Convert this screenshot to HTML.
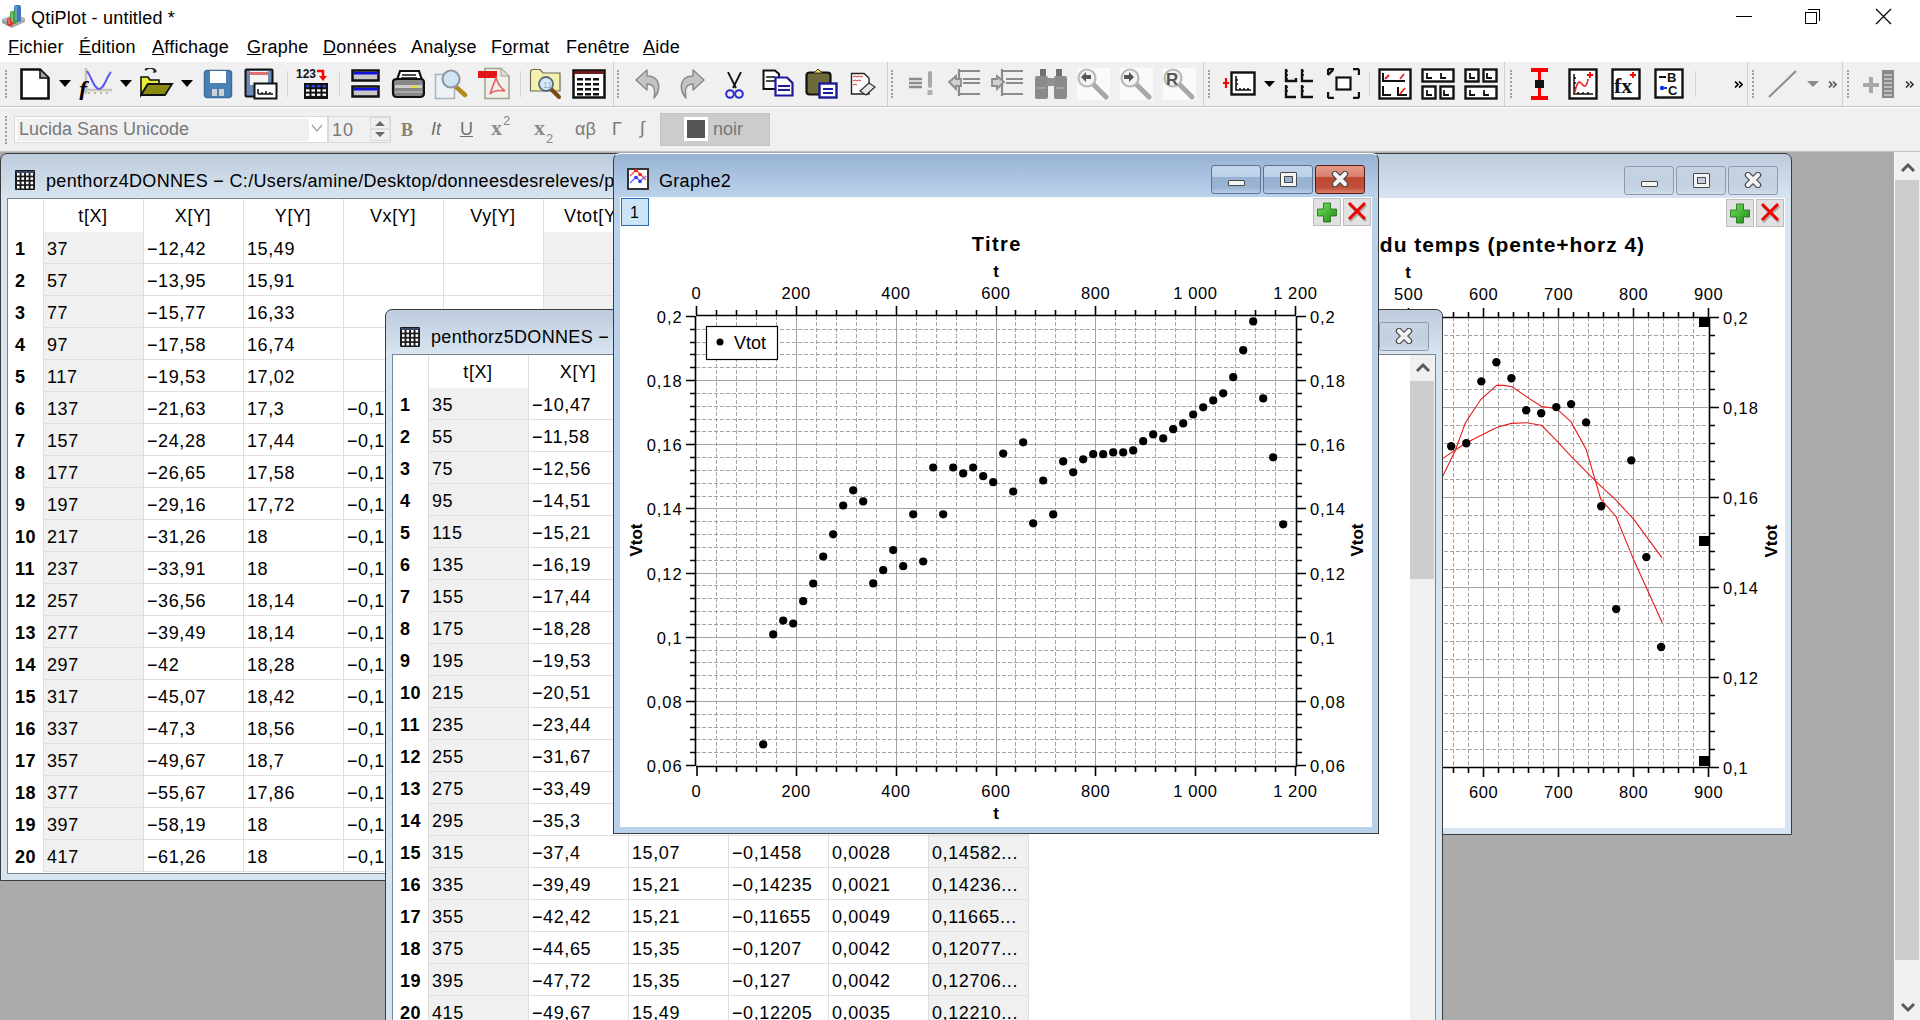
<!DOCTYPE html><html><head><meta charset="utf-8"><title>QtiPlot</title><style>
html,body{margin:0;padding:0;}body{width:1920px;height:1020px;overflow:hidden;position:relative;background:#ababab;font-family:"Liberation Sans",sans-serif;}
div{box-sizing:border-box;} .u{text-decoration:underline;text-underline-offset:1px;text-decoration-thickness:1px;}
</style></head><body>
<div style="position:absolute;left:0px;top:0px;width:1920px;height:35px;background:#fff;"></div>
<svg style="position:absolute;left:0px;top:0px" width="28" height="32" viewBox="0 0 28 32">
<polygon points="2,19 15,14 25,18 12,24" fill="#b4b8bc"/><polygon points="2,19 12,24 12,28 2,23" fill="#9a9ea2"/><polygon points="25,18 12,24 12,28 25,22" fill="#a8acb0"/>
<rect x="14" y="5" width="7" height="17" rx="2" fill="#3f78b8"/><rect x="10" y="11" width="7" height="13" rx="2" fill="#3fa048"/><rect x="7" y="18" width="6" height="8" rx="2" fill="#d8382a"/>
<rect x="15" y="6" width="2" height="14" fill="#7aa8d8" opacity="0.7"/><rect x="11" y="12" width="2" height="10" fill="#8ad08a" opacity="0.7"/><rect x="8" y="19" width="2" height="5" fill="#f08070" opacity="0.7"/></svg>
<div style="position:absolute;left:31px;top:9px;font-size:18px;line-height:1;color:#000;font-weight:normal;white-space:nowrap;letter-spacing:0.2px;">QtiPlot - untitled *</div>
<div style="position:absolute;left:1736px;top:16px;width:16px;height:1px;background:#000;"></div>
<div style="position:absolute;left:1808px;top:9px;width:12px;height:12px;border:1px solid #000;border-left:none;border-bottom:none;"></div>
<div style="position:absolute;left:1805px;top:12px;width:12px;height:12px;border:1px solid #000;background:#fff;"></div>
<svg style="position:absolute;left:1875px;top:8px" width="17" height="17"><path d="M1,1 L16,16 M16,1 L1,16" stroke="#000" stroke-width="1.2"/></svg>
<div style="position:absolute;left:0px;top:35px;width:1920px;height:26px;background:#fff;"></div>
<div style="position:absolute;left:8px;top:38px;font-size:18px;line-height:1;color:#000;font-weight:normal;white-space:nowrap;letter-spacing:0.25px;"><span class="u">F</span>ichier</div>
<div style="position:absolute;left:79px;top:38px;font-size:18px;line-height:1;color:#000;font-weight:normal;white-space:nowrap;letter-spacing:0.25px;"><span class="u">É</span>dition</div>
<div style="position:absolute;left:152px;top:38px;font-size:18px;line-height:1;color:#000;font-weight:normal;white-space:nowrap;letter-spacing:0.25px;"><span class="u">A</span>ffichage</div>
<div style="position:absolute;left:247px;top:38px;font-size:18px;line-height:1;color:#000;font-weight:normal;white-space:nowrap;letter-spacing:0.25px;"><span class="u">G</span>raphe</div>
<div style="position:absolute;left:323px;top:38px;font-size:18px;line-height:1;color:#000;font-weight:normal;white-space:nowrap;letter-spacing:0.25px;"><span class="u">D</span>onnées</div>
<div style="position:absolute;left:411px;top:38px;font-size:18px;line-height:1;color:#000;font-weight:normal;white-space:nowrap;letter-spacing:0.25px;">Anal<span class="u">y</span>se</div>
<div style="position:absolute;left:491px;top:38px;font-size:18px;line-height:1;color:#000;font-weight:normal;white-space:nowrap;letter-spacing:0.25px;">F<span class="u">o</span>rmat</div>
<div style="position:absolute;left:566px;top:38px;font-size:18px;line-height:1;color:#000;font-weight:normal;white-space:nowrap;letter-spacing:0.25px;">Fenêt<span class="u">r</span>e</div>
<div style="position:absolute;left:643px;top:38px;font-size:18px;line-height:1;color:#000;font-weight:normal;white-space:nowrap;letter-spacing:0.25px;"><span class="u">A</span>ide</div>
<div style="position:absolute;left:0px;top:61px;width:1920px;height:91px;background:#f0f0f0;"></div>
<div style="position:absolute;left:0px;top:61px;width:1920px;height:1px;background:#fbfbfb;"></div>
<div style="position:absolute;left:0px;top:106px;width:1920px;height:1px;background:#c6c6c6;"></div>
<div style="position:absolute;left:0px;top:107px;width:1920px;height:1px;background:#fcfcfc;"></div>
<div style="position:absolute;left:0px;top:151px;width:1920px;height:1px;background:#c4c4c4;"></div>
<div style="position:absolute;left:613px;top:62px;width:1px;height:44px;background:#d0d0d0;"></div>
<div style="position:absolute;left:887px;top:62px;width:1px;height:44px;background:#d0d0d0;"></div>
<div style="position:absolute;left:1203px;top:62px;width:1px;height:44px;background:#d0d0d0;"></div>
<div style="position:absolute;left:1504px;top:62px;width:1px;height:44px;background:#d0d0d0;"></div>
<div style="position:absolute;left:1747px;top:62px;width:1px;height:44px;background:#d0d0d0;"></div>
<div style="position:absolute;left:1842px;top:62px;width:1px;height:44px;background:#d0d0d0;"></div>
<div style="position:absolute;left:5px;top:70px;width:3px;height:28px;border-left:2px dotted #a0a0a0;"></div>
<div style="position:absolute;left:617px;top:70px;width:3px;height:28px;border-left:2px dotted #a0a0a0;"></div>
<div style="position:absolute;left:891px;top:70px;width:3px;height:28px;border-left:2px dotted #a0a0a0;"></div>
<div style="position:absolute;left:1208px;top:70px;width:3px;height:28px;border-left:2px dotted #a0a0a0;"></div>
<div style="position:absolute;left:1510px;top:70px;width:3px;height:28px;border-left:2px dotted #a0a0a0;"></div>
<div style="position:absolute;left:1752px;top:70px;width:3px;height:28px;border-left:2px dotted #a0a0a0;"></div>
<div style="position:absolute;left:1847px;top:70px;width:3px;height:28px;border-left:2px dotted #a0a0a0;"></div>
<div style="position:absolute;left:5px;top:116px;width:3px;height:28px;border-left:2px dotted #a0a0a0;"></div>
<div style="position:absolute;left:287px;top:71px;width:1px;height:26px;background:#d3d3d3;"></div>
<div style="position:absolute;left:339px;top:71px;width:1px;height:26px;background:#d3d3d3;"></div>
<div style="position:absolute;left:520px;top:71px;width:1px;height:26px;background:#d3d3d3;"></div>
<div style="position:absolute;left:1369px;top:71px;width:1px;height:26px;background:#d3d3d3;"></div>
<div style="position:absolute;left:1695px;top:71px;width:1px;height:26px;background:#d3d3d3;"></div>
<svg style="position:absolute;left:20px;top:68px;" width="30" height="32" viewBox="0 0 30 32"><path d="M1.5,1.5 H20 L28.5,10 V30.5 H1.5 Z" fill="#fff" stroke="#111" stroke-width="2.6"/><path d="M20,2 V10 H28" fill="#9aa4ae" stroke="#111" stroke-width="1.6"/></svg>
<svg style="position:absolute;left:59px;top:80px;" width="12" height="7" viewBox="0 0 12 7"><path d="M0,0 H12 L6.0,7 Z" fill="#000"/></svg>
<svg style="position:absolute;left:79px;top:68px;" width="34" height="32" viewBox="0 0 34 32"><path d="M7,0 V26 M7,22 H33" stroke="#c8c4b4" stroke-width="2.5"/><path d="M10,26 v-2 M16,26 v-2 M22,26 v-2 M28,26 v-2" stroke="#a8a498" stroke-width="1.5"/><path d="M8,3 C12,8 15,21 20,21 C25,21 27,10 32,4" fill="none" stroke="#5b5bf0" stroke-width="2"/><text x="0" y="29" font-family="Liberation Serif,serif" font-size="24" font-weight="bold" font-style="italic" fill="#000">f</text></svg>
<svg style="position:absolute;left:120px;top:80px;" width="12" height="7" viewBox="0 0 12 7"><path d="M0,0 H12 L6.0,7 Z" fill="#000"/></svg>
<svg style="position:absolute;left:140px;top:68px;" width="34" height="30" viewBox="0 0 34 30"><path d="M5,2 C9,-1 12,-1 16,3" fill="none" stroke="#222" stroke-width="1.8"/><path d="M14,1 L17,4 L13,5 Z" fill="#222"/><path d="M1,9 H8 L10,12 H19 V17 H7 L1,27 Z" fill="#e8ec3a" stroke="#111" stroke-width="1.6"/><path d="M1,27 L8,16 H32 L25,27 Z" fill="#8a8a10" stroke="#111" stroke-width="1.8"/></svg>
<svg style="position:absolute;left:181px;top:80px;" width="12" height="7" viewBox="0 0 12 7"><path d="M0,0 H12 L6.0,7 Z" fill="#000"/></svg>
<svg style="position:absolute;left:203px;top:69px;" width="30" height="30" viewBox="0 0 30 30"><rect x="1.5" y="1.5" width="27" height="27" rx="3" fill="#4a80b4" stroke="#3a6c9c" stroke-width="1.5"/><rect x="7" y="2" width="16" height="12" fill="#fff"/><rect x="9" y="20" width="5" height="7" fill="#d0d0d0"/><rect x="16" y="20" width="5" height="7" fill="#d0d0d0"/></svg>
<svg style="position:absolute;left:244px;top:68px;" width="34" height="32" viewBox="0 0 34 32"><rect x="1.5" y="1.5" width="27" height="27" rx="1" fill="#6a8cb4" stroke="#111" stroke-width="2"/><rect x="6" y="3" width="18" height="14" fill="#f4f4f4"/><rect x="6" y="4" width="18" height="3" fill="#e07070"/><rect x="10.5" y="15.5" width="22" height="15" fill="#fff" stroke="#111" stroke-width="2"/><path d="M14,26 V21 M14,26 H29 M18,26 v-2 M22,26 v-3 M26,26 v-2" stroke="#111" stroke-width="1.5"/></svg>
<svg style="position:absolute;left:296px;top:67px;" width="34" height="32" viewBox="0 0 34 32"><text x="0" y="11" font-family="Liberation Sans,sans-serif" font-size="12" font-weight="bold" fill="#111">123</text><path d="M21,4 H27 V10" fill="none" stroke="#f00" stroke-width="2.5"/><path d="M23,9 H31 L27,14 Z" fill="#f00"/><rect x="8" y="16" width="24" height="16" fill="#111"/><rect x="10.0" y="18.0" width="3.5" height="2.3" fill="#3344dd"/><rect x="10.0" y="22.3" width="3.5" height="2.3" fill="#fff"/><rect x="10.0" y="26.6" width="3.5" height="2.3" fill="#fff"/><rect x="15.5" y="18.0" width="3.5" height="2.3" fill="#3344dd"/><rect x="15.5" y="22.3" width="3.5" height="2.3" fill="#fff"/><rect x="15.5" y="26.6" width="3.5" height="2.3" fill="#fff"/><rect x="21.0" y="18.0" width="3.5" height="2.3" fill="#3344dd"/><rect x="21.0" y="22.3" width="3.5" height="2.3" fill="#fff"/><rect x="21.0" y="26.6" width="3.5" height="2.3" fill="#fff"/><rect x="26.5" y="18.0" width="3.5" height="2.3" fill="#3344dd"/><rect x="26.5" y="22.3" width="3.5" height="2.3" fill="#fff"/><rect x="26.5" y="26.6" width="3.5" height="2.3" fill="#fff"/></svg>
<svg style="position:absolute;left:351px;top:69px;" width="29" height="30" viewBox="0 0 29 30"><rect x="1.5" y="1.5" width="26" height="10" fill="#c8c8c8" stroke="#111" stroke-width="2.5"/><rect x="3" y="3" width="23" height="2.5" fill="#1010e0"/><rect x="1.5" y="17.5" width="26" height="10" fill="#c8c8c8" stroke="#111" stroke-width="2.5"/><rect x="3" y="19" width="23" height="2.5" fill="#1010e0"/></svg>
<svg style="position:absolute;left:391px;top:69px;" width="34" height="30" viewBox="0 0 34 30"><path d="M9,2 H28 L31,11 H6 Z" fill="#fff" stroke="#111" stroke-width="2.2"/><path d="M11,6 H25 M10,9 H26" stroke="#111" stroke-width="1.6"/><path d="M2,13 Q2,10 6,10 H30 Q33,10 33,14 V24 Q33,28 29,28 H6 Q2,28 2,24 Z" fill="#888" stroke="#111" stroke-width="2.2"/><rect x="4" y="16" width="27" height="3" fill="#ccc"/><rect x="20" y="17" width="6" height="2" fill="#e8e020"/><rect x="4" y="22" width="27" height="2" fill="#aaa"/></svg>
<svg style="position:absolute;left:434px;top:68px;" width="34" height="32" viewBox="0 0 34 32"><rect x="1.5" y="6.5" width="19" height="24" fill="#eef2f6" stroke="#a8b4c0" stroke-width="1.5"/><path d="M21,18 L31,27" stroke="#b08a20" stroke-width="4.5" stroke-linecap="round"/><circle cx="17" cy="11" r="8.5" fill="#cfe4f4" stroke="#909aa4" stroke-width="2.2"/></svg>
<svg style="position:absolute;left:477px;top:67px;" width="34" height="33" viewBox="0 0 34 33"><path d="M8,1.5 H24 L32,9 V31.5 H8 Z" fill="#f0f0ea" stroke="#a0a090" stroke-width="1.5"/><path d="M24,2 V9 H32" fill="#ddd" stroke="#a0a090" stroke-width="1"/><rect x="1" y="4" width="19" height="7" fill="#e01818"/><path d="M13,27 C16,18 18,14 19,11 C20,14 22,20 28,24 C22,23 16,24 13,27 Z" fill="none" stroke="#e86060" stroke-width="1.6"/></svg>
<svg style="position:absolute;left:529px;top:68px;" width="34" height="32" viewBox="0 0 34 32"><path d="M1.5,4 Q1.5,1.5 4,1.5 H11 L14,5 H31 V23 H1.5 Z" fill="#f4f0b0" stroke="#6a6a50" stroke-width="1.2"/><path d="M22,21 L30,29" stroke="#7a4a10" stroke-width="4" stroke-linecap="round"/><circle cx="17" cy="16" r="7" fill="#d8e8f8" stroke="#5a6a7a" stroke-width="1.8"/><text x="14" y="20" font-size="9" fill="#9ab">11</text></svg>
<svg style="position:absolute;left:572px;top:69px;" width="34" height="30" viewBox="0 0 34 30"><rect x="1.5" y="1.5" width="31" height="27" fill="#fff" stroke="#111" stroke-width="2.5"/><rect x="2" y="2" width="30" height="3" fill="#6a1a1a"/><rect x="5" y="9" width="6" height="2.5" fill="#111"/><rect x="5" y="14" width="6" height="2.5" fill="#111"/><rect x="5" y="19" width="6" height="2.5" fill="#111"/><rect x="5" y="24" width="6" height="2.5" fill="#111"/><rect x="13" y="9" width="6" height="2.5" fill="#111"/><rect x="13" y="14" width="6" height="2.5" fill="#111"/><rect x="13" y="19" width="6" height="2.5" fill="#111"/><rect x="13" y="24" width="6" height="2.5" fill="#111"/><rect x="21" y="9" width="6" height="2.5" fill="#111"/><rect x="21" y="14" width="6" height="2.5" fill="#111"/><rect x="21" y="19" width="6" height="2.5" fill="#111"/><rect x="21" y="24" width="6" height="2.5" fill="#111"/></svg>
<svg style="position:absolute;left:635px;top:68px;" width="27" height="32" viewBox="0 0 27 32"><path d="M12,2 L1,12 L12,22 L12,16 C18,16 21,20 19,30 C26,22 26,8 12,8 Z" fill="#c4c4c4" stroke="#8a8a8a" stroke-width="1.5" stroke-linejoin="round"/></svg>
<svg style="position:absolute;left:678px;top:68px;" width="27" height="32" viewBox="0 0 27 32"><path d="M15,2 L26,12 L15,22 L15,16 C9,16 6,20 8,30 C1,22 1,8 15,8 Z" fill="#c4c4c4" stroke="#8a8a8a" stroke-width="1.5" stroke-linejoin="round"/></svg>
<svg style="position:absolute;left:725px;top:72px;" width="19" height="28" viewBox="0 0 19 28"><path d="M3,0 L11,16 M16,0 L8,16" stroke="#111" stroke-width="1.8"/><circle cx="5" cy="22" r="3.8" fill="none" stroke="#2a2ad0" stroke-width="2"/><circle cx="14" cy="22" r="3.8" fill="none" stroke="#2a2ad0" stroke-width="2"/></svg>
<svg style="position:absolute;left:762px;top:69px;" width="32" height="28" viewBox="0 0 32 28"><path d="M1.5,1.5 H13 L17,5 V20 H1.5 Z" fill="#fff" stroke="#111" stroke-width="2"/><path d="M4,8 H13 M4,12 H13" stroke="#111" stroke-width="1.5"/><path d="M13.5,8.5 H25 L30.5,14 V26.5 H13.5 Z" fill="#fff" stroke="#1a1a9a" stroke-width="2.2"/><path d="M16,17 H28 M16,21 H28" stroke="#1a1a9a" stroke-width="1.8"/></svg>
<svg style="position:absolute;left:805px;top:68px;" width="33" height="32" viewBox="0 0 33 32"><rect x="1.5" y="4.5" width="24" height="22" rx="3" fill="#6e6a3a" stroke="#111" stroke-width="2.2"/><path d="M9,5 L13,1 L17,5 Z" fill="#f0e030" stroke="#444" stroke-width="1"/><rect x="14.5" y="15.5" width="17" height="14" fill="#fff" stroke="#1a1a9a" stroke-width="2.4"/><path d="M18,21 H28 M18,25 H28" stroke="#1a1a9a" stroke-width="1.8"/></svg>
<svg style="position:absolute;left:850px;top:72px;" width="26" height="26" viewBox="0 0 26 26"><path d="M1.5,1.5 H14 L19,6 V22 H1.5 Z" fill="#fff" stroke="#222" stroke-width="1.4"/><path d="M3,5 l2,-1 2,1 2,-1 2,1 2,-1 M3,9 l2,-1 2,1 2,-1 2,1 M3,13 l2,-1 2,1" fill="none" stroke="#e03030" stroke-width="1"/><path d="M10,19 L19,11 L25,15 L16,23 Z" fill="#e8e8e8" stroke="#333" stroke-width="1.3"/></svg>
<svg style="position:absolute;left:908px;top:71px;" width="28" height="26" viewBox="0 0 28 26"><path d="M1,8 H14 M1,12 H14 M1,16 H14" stroke="#8c8c8c" stroke-width="2.4"/><path d="M22,2 V15" stroke="#a8a8a8" stroke-width="4" stroke-linecap="round"/><rect x="19.5" y="19" width="5" height="5" fill="#b0b0b0"/></svg>
<svg style="position:absolute;left:948px;top:68px;" width="34" height="31" viewBox="0 0 34 31"><path d="M11,1 V28 M10,3 H32 M10,26 H32 M15,11 H32 M15,15 H32" stroke="#8c8c8c" stroke-width="2.2"/><path d="M1,14 L8,8 V11 H13 V18 H8 V21 Z" fill="#d0d0d0" stroke="#8c8c8c" stroke-width="1.8"/></svg>
<svg style="position:absolute;left:991px;top:68px;" width="34" height="31" viewBox="0 0 34 31"><path d="M11,1 V28 M10,3 H32 M10,26 H32 M15,11 H32 M15,15 H32" stroke="#8c8c8c" stroke-width="2.2"/><path d="M13,14 L6,8 V11 H1 V18 H6 V21 Z" fill="#d0d0d0" stroke="#8c8c8c" stroke-width="1.8"/></svg>
<svg style="position:absolute;left:1034px;top:68px;" width="34" height="31" viewBox="0 0 34 31"><rect x="6" y="1" width="6" height="8" fill="#707070"/><rect x="22" y="1" width="6" height="8" fill="#707070"/><rect x="1" y="8" width="13" height="23" rx="2" fill="#8a8a8a"/><rect x="20" y="8" width="13" height="23" rx="2" fill="#8a8a8a"/><rect x="13" y="10" width="8" height="8" fill="#909090"/><path d="M3,20 H12 M22,20 H31" stroke="#aaa" stroke-width="1.5"/></svg>
<svg style="position:absolute;left:1077px;top:68px;" width="33" height="32" viewBox="0 0 33 32"><rect x="0" y="0" width="33" height="32" fill="#fafafa"/><path d="M17,17 L29,29" stroke="#a8a8a8" stroke-width="5" stroke-linecap="round"/><circle cx="10" cy="10" r="8.5" fill="#f4f4f4" stroke="#b8b8b8" stroke-width="2.2"/><path d="M4,9 L9,4 V7 H14 V11 H9 V14 Z" fill="#555"/></svg>
<svg style="position:absolute;left:1120px;top:68px;" width="33" height="32" viewBox="0 0 33 32"><rect x="0" y="0" width="33" height="32" fill="#fafafa"/><path d="M17,17 L29,29" stroke="#a8a8a8" stroke-width="5" stroke-linecap="round"/><circle cx="10" cy="10" r="8.5" fill="#f4f4f4" stroke="#b8b8b8" stroke-width="2.2"/><path d="M14,9 L9,4 V7 H4 V11 H9 V14 Z" fill="#555"/></svg>
<svg style="position:absolute;left:1163px;top:68px;" width="33" height="32" viewBox="0 0 33 32"><rect x="0" y="0" width="33" height="32" fill="#fafafa"/><path d="M17,17 L29,29" stroke="#a8a8a8" stroke-width="5" stroke-linecap="round"/><circle cx="10" cy="10" r="8.5" fill="#f4f4f4" stroke="#b8b8b8" stroke-width="2.2"/><text x="3" y="17" font-family="Liberation Sans,sans-serif" font-size="17" font-weight="bold" fill="#555">R</text></svg>
<svg style="position:absolute;left:1222px;top:71px;" width="34" height="26" viewBox="0 0 34 26"><path d="M4,7 V17 M1,12 H7" stroke="#f00" stroke-width="2.2"/><rect x="9.5" y="1.5" width="23" height="22" fill="#fff" stroke="#111" stroke-width="2.4"/><path d="M14,5 V19 H29 M14,9 h2 M14,13 h2 M18,19 v-2 M22,19 v-2 M26,19 v-2" fill="none" stroke="#111" stroke-width="1.6"/></svg>
<svg style="position:absolute;left:1264px;top:81px;" width="11" height="6" viewBox="0 0 11 6"><path d="M0,0 H11 L5.5,6 Z" fill="#000"/></svg>
<svg style="position:absolute;left:1284px;top:68px;" width="31" height="31" viewBox="0 0 31 31"><path d="M2,1 V13 H12 V10 M2,17 V29 H12 M18,1 V13 H29 M18,17 V29 H29" fill="none" stroke="#111" stroke-width="2.4"/><path d="M2,3 h2 M2,7 h2 M2,11 h2 M2,19 h2 M2,23 h2 M18,3 h2 M18,7 h2 M18,19 h2 M18,23 h2" stroke="#111" stroke-width="1.5"/></svg>
<svg style="position:absolute;left:1327px;top:68px;" width="33" height="31" viewBox="0 0 33 31"><rect x="9.5" y="9.5" width="14" height="12" fill="#fff" stroke="#111" stroke-width="2.2"/><path d="M1,7 L6,2 M1,1 h6 v0 M1,1 v6 M32,1 h-6 M32,1 v6 M32,30 h-6 M32,30 v-6 M1,30 h6 M1,30 v-6" stroke="#111" stroke-width="2.4"/></svg>
<svg style="position:absolute;left:1378px;top:68px;" width="34" height="32" viewBox="0 0 34 32"><rect x="1.5" y="1.5" width="31" height="29" fill="#fff" stroke="#111" stroke-width="2.4"/><path d="M5,5 V13 H27 M5,18 V27 H13 M20,19 V27 H29" fill="none" stroke="#111" stroke-width="2"/><path d="M7,11 L11,7 M22,11 L26,6 M22,26 L27,20" stroke="#f02020" stroke-width="1.8"/></svg>
<svg style="position:absolute;left:1421px;top:68px;" width="34" height="32" viewBox="0 0 34 32"><rect x="1.5" y="1.5" width="31" height="12" fill="#fff" stroke="#111" stroke-width="2.4"/><rect x="1.5" y="18.5" width="13" height="12" fill="#fff" stroke="#111" stroke-width="2.4"/><rect x="19.5" y="18.5" width="13" height="12" fill="#fff" stroke="#111" stroke-width="2.4"/><path d="M6,5 V10 H11 M20,5 V10 H25 M6,22 V27 H11 M23,22 V27 H28" fill="none" stroke="#111" stroke-width="1.8"/></svg>
<svg style="position:absolute;left:1464px;top:68px;" width="34" height="32" viewBox="0 0 34 32"><rect x="1.5" y="1.5" width="13" height="12" fill="#fff" stroke="#111" stroke-width="2.4"/><rect x="19.5" y="1.5" width="13" height="12" fill="#fff" stroke="#111" stroke-width="2.4"/><rect x="1.5" y="18.5" width="31" height="12" fill="#fff" stroke="#111" stroke-width="2.4"/><path d="M6,5 V10 H11 M23,5 V10 H28 M6,22 V27 H11 M20,22 V27 H25" fill="none" stroke="#111" stroke-width="1.8"/></svg>
<svg style="position:absolute;left:1531px;top:68px;" width="18" height="32" viewBox="0 0 18 32"><rect x="0" y="0" width="17" height="4" fill="#f00"/><rect x="0" y="28" width="17" height="4" fill="#f00"/><rect x="7" y="2" width="3" height="28" fill="#f00"/><rect x="4" y="12" width="9" height="8" fill="#111"/></svg>
<svg style="position:absolute;left:1568px;top:68px;" width="30" height="32" viewBox="0 0 30 32"><rect x="1.5" y="1.5" width="27" height="29" fill="#fff" stroke="#111" stroke-width="2.4"/><path d="M6,6 V26 H25 M6,10 h2 M6,15 h2 M6,20 h2 M10,26 v-2 M15,26 v-2 M20,26 v-2" fill="none" stroke="#111" stroke-width="1.5"/><path d="M7,24 C9,14 11,12 14,16 C17,20 19,18 20,11" fill="none" stroke="#e82020" stroke-width="1.6"/><path d="M22,4 V10 M19,7 H25" stroke="#f00" stroke-width="1.8"/></svg>
<svg style="position:absolute;left:1611px;top:68px;" width="30" height="32" viewBox="0 0 30 32"><rect x="1.5" y="1.5" width="27" height="29" fill="#fff" stroke="#111" stroke-width="2.4"/><text x="3" y="25" font-family="Liberation Serif,serif" font-size="22" font-weight="bold" fill="#111">fx</text><path d="M22,4 V10 M19,7 H25" stroke="#f00" stroke-width="1.8"/></svg>
<svg style="position:absolute;left:1654px;top:68px;" width="30" height="31" viewBox="0 0 30 31"><rect x="1.5" y="1.5" width="27" height="28" fill="#fff" stroke="#111" stroke-width="2.4"/><path d="M5,9 H12" stroke="#111" stroke-width="2"/><text x="13" y="14" font-family="Liberation Sans,sans-serif" font-size="13" font-weight="bold" fill="#111">B</text><text x="14" y="27" font-family="Liberation Sans,sans-serif" font-size="13" font-weight="bold" fill="#111">C</text><path d="M6,20 H13" stroke="#1030f0" stroke-width="2"/><circle cx="8" cy="20" r="2.2" fill="#1030f0"/></svg>
<svg style="position:absolute;left:1734px;top:81px;" width="9" height="7" viewBox="0 0 9 7"><path d="M1,0.5 L4,3.5 L1,6.5 M5,0.5 L8,3.5 L5,6.5" fill="none" stroke="#000" stroke-width="1.6"/></svg>
<svg style="position:absolute;left:1768px;top:69px;" width="30" height="30" viewBox="0 0 30 30"><path d="M1,28 L28,2" stroke="#8c8c8c" stroke-width="2"/></svg>
<svg style="position:absolute;left:1807px;top:81px;" width="12" height="6" viewBox="0 0 12 6"><path d="M0,0 H12 L6.0,6 Z" fill="#8a8a8a"/></svg>
<svg style="position:absolute;left:1828px;top:81px;" width="9" height="7" viewBox="0 0 9 7"><path d="M1,0.5 L4,3.5 L1,6.5 M5,0.5 L8,3.5 L5,6.5" fill="none" stroke="#555" stroke-width="1.6"/></svg>
<svg style="position:absolute;left:1863px;top:69px;" width="32" height="30" viewBox="0 0 32 30"><path d="M8,8 V24 M0,16 H16" stroke="#a8a8a8" stroke-width="4"/><rect x="19" y="1" width="12" height="28" fill="#8a8a8a"/><rect x="21" y="5" width="8" height="2" fill="#bdbdbd"/><rect x="21" y="9" width="8" height="2" fill="#bdbdbd"/><rect x="21" y="13" width="8" height="2" fill="#bdbdbd"/><rect x="21" y="17" width="8" height="2" fill="#bdbdbd"/><rect x="21" y="21" width="8" height="2" fill="#bdbdbd"/><rect x="21" y="25" width="8" height="2" fill="#bdbdbd"/></svg>
<svg style="position:absolute;left:1905px;top:81px;" width="9" height="7" viewBox="0 0 9 7"><path d="M1,0.5 L4,3.5 L1,6.5 M5,0.5 L8,3.5 L5,6.5" fill="none" stroke="#333" stroke-width="1.6"/></svg>
<div style="position:absolute;left:14px;top:116px;width:314px;height:27px;background:#fff;border:1px solid #d9d9d9;"></div>
<div style="position:absolute;left:17px;top:119px;width:292px;height:22px;background:#f0f0f0;"></div>
<div style="position:absolute;left:19px;top:120px;font-size:18px;line-height:1;color:#787878;font-weight:normal;white-space:nowrap;">Lucida Sans Unicode</div>
<svg style="position:absolute;left:311px;top:124px" width="12" height="9"><path d="M1,1 L6,7 L11,1" fill="none" stroke="#a0a0a0" stroke-width="1.2"/></svg>
<div style="position:absolute;left:328px;top:116px;width:63px;height:27px;background:#f0f0f0;border:1px solid #d9d9d9;"></div>
<div style="position:absolute;left:332px;top:121px;font-size:18px;line-height:1;color:#787878;font-weight:normal;white-space:nowrap;letter-spacing:1px;">10</div>
<div style="position:absolute;left:370px;top:117px;width:20px;height:12px;border:1px solid #dcdcdc;background:#f0f0f0;"></div>
<div style="position:absolute;left:370px;top:129px;width:20px;height:12px;border:1px solid #dcdcdc;background:#f0f0f0;"></div>
<svg style="position:absolute;left:371px;top:117px" width="18" height="24"><path d="M4,9 L9,4 L14,9 Z M4,15 L14,15 L9,20 Z" fill="#6a6a6a"/></svg>
<div style="position:absolute;left:401px;top:121px;font-size:18px;line-height:1;color:#8a7f70;font-weight:normal;white-space:nowrap;font-family:'Liberation Serif',serif;"><b>B</b></div>
<div style="position:absolute;left:431px;top:120px;font-size:18px;line-height:1;color:#6f6f6f;font-weight:normal;white-space:nowrap;"><i>It</i></div>
<div style="position:absolute;left:460px;top:120px;font-size:18px;line-height:1;color:#6f6f6f;font-weight:normal;white-space:nowrap;"><span style="text-decoration:underline">U</span></div>
<div style="position:absolute;left:491px;top:117px;font-size:22px;line-height:1;color:#8c8c8c;font-weight:normal;white-space:nowrap;font-family:'Liberation Serif',serif;"><b>x</b></div>
<div style="position:absolute;left:503px;top:114px;font-size:13px;line-height:1;color:#888;font-weight:normal;white-space:nowrap;">2</div>
<div style="position:absolute;left:534px;top:117px;font-size:22px;line-height:1;color:#8c8c8c;font-weight:normal;white-space:nowrap;font-family:'Liberation Serif',serif;"><b>x</b></div>
<div style="position:absolute;left:546px;top:132px;font-size:13px;line-height:1;color:#888;font-weight:normal;white-space:nowrap;">2</div>
<div style="position:absolute;left:575px;top:120px;font-size:18px;line-height:1;color:#7a7a7a;font-weight:normal;white-space:nowrap;">αβ</div>
<div style="position:absolute;left:612px;top:120px;font-size:18px;line-height:1;color:#7a7a7a;font-weight:normal;white-space:nowrap;">Γ</div>
<div style="position:absolute;left:640px;top:119px;font-size:18px;line-height:1;color:#7a7a7a;font-weight:normal;white-space:nowrap;">∫</div>
<div style="position:absolute;left:660px;top:113px;width:110px;height:33px;background:#cccccc;border:1px solid #c4c4c4;"></div>
<div style="position:absolute;left:684px;top:117px;width:24px;height:24px;background:#555;border:3px solid #fff;"></div>
<div style="position:absolute;left:713px;top:120px;font-size:18px;line-height:1;color:#777;font-weight:normal;white-space:nowrap;">noir</div>
<div style="position:absolute;left:1894px;top:152px;width:26px;height:868px;background:#f0f0f0;border-left:1px solid #fafafa;"></div>
<div style="position:absolute;left:1895px;top:180px;width:24px;height:780px;background:#cdcdcd;"></div>
<svg style="position:absolute;left:1900px;top:161px" width="16" height="12"><path d="M2,10 L8,4 L14,10" fill="none" stroke="#5a5a5a" stroke-width="3"/></svg>
<svg style="position:absolute;left:1900px;top:1002px" width="16" height="12"><path d="M2,2 L8,8 L14,2" fill="none" stroke="#5a5a5a" stroke-width="3"/></svg>
<div style="position:absolute;left:1000px;top:153px;width:792px;height:682px;background:linear-gradient(to bottom,#bdcbdc 0px,#d8e4f1 44px,#d6e3f0 45px,#d6e3f0 100%);border:1px solid #3c3c3c;border-top-color:#3c3c3c;border-radius:7px 7px 0 0;"></div>
<div style="position:absolute;left:1007px;top:198px;width:778px;height:630px;background:#fff;"></div>
<div style="position:absolute;left:1624px;top:166px;width:50px;height:29px;background:linear-gradient(to bottom,#c6d3e2 0%,#c3d0e0 50%,#c5d3e3 80%,#cfdcea 100%);border:1px solid #8a9ab2;border-radius:3px;"></div>
<div style="position:absolute;left:1641px;top:181px;width:17px;height:6px;background:#f4f4f4;border:1px solid #4a4a4a;border-radius:1px;"></div>
<div style="position:absolute;left:1676px;top:166px;width:50px;height:29px;background:linear-gradient(to bottom,#c6d3e2 0%,#c3d0e0 50%,#c5d3e3 80%,#cfdcea 100%);border:1px solid #8a9ab2;border-radius:3px;"></div>
<div style="position:absolute;left:1693px;top:173px;width:17px;height:15px;background:transparent;border:1px solid #4a4a4a;border-radius:1px;"></div>
<div style="position:absolute;left:1694px;top:174px;width:15px;height:13px;background:transparent;border:3px solid #f4f4f4;"></div>
<div style="position:absolute;left:1697px;top:177px;width:9px;height:7px;background:transparent;border:1px solid #4a4a4a;"></div>
<div style="position:absolute;left:1728px;top:166px;width:50px;height:29px;background:linear-gradient(to bottom,#c6d3e2 0%,#c3d0e0 50%,#c5d3e3 80%,#cfdcea 100%);border:1px solid #8a9ab2;border-radius:3px;"></div>
<svg style="position:absolute;left:1744px;top:172px;" width="18" height="16" viewBox="0 0 18 16"><path d="M4,3 L14,13 M14,3 L4,13" stroke="#4a4a4a" stroke-width="6.5" stroke-linecap="round"/><path d="M4,3 L14,13 M14,3 L4,13" stroke="#f4f4f4" stroke-width="4.2" stroke-linecap="round"/></svg>
<svg style="position:absolute;left:1726px;top:199px;" width="58" height="28" viewBox="0 0 58 28"><rect x="0.5" y="0.5" width="27" height="27" fill="#e1e1e1" stroke="#bdbdbd"/><rect x="30.5" y="0.5" width="27" height="27" fill="#e1e1e1" stroke="#bdbdbd"/><defs><linearGradient id="gp" x1="0" y1="0" x2="1" y2="1"><stop offset="0" stop-color="#78e060"/><stop offset="1" stop-color="#1c8a14"/></linearGradient></defs><path d="M10.5,5 h7 v6 h6 v7 h-6 v6 h-7 v-6 h-6 v-7 h6 z" fill="url(#gp)" stroke="#1a6a12" stroke-width="0.8"/><path d="M36,5 L52,21 M52,5 L36,21" stroke="#777" stroke-width="3" transform="translate(1,2)" opacity="0.5"/><path d="M36,5 L52,21 M52,5 L36,21" stroke="#f00000" stroke-width="3"/></svg>
<svg style="position:absolute;left:1000px;top:153px;" width="792" height="682" viewBox="0 0 792 682"><line x1="123.5" y1="164" x2="123.5" y2="614" stroke="#a4a4a4" stroke-dasharray="4,2"/><line x1="138.5" y1="164" x2="138.5" y2="614" stroke="#a4a4a4" stroke-dasharray="4,2"/><line x1="153.5" y1="164" x2="153.5" y2="614" stroke="#a4a4a4" stroke-dasharray="4,2"/><line x1="168.5" y1="164" x2="168.5" y2="614" stroke="#a4a4a4" stroke-dasharray="4,2"/><line x1="183.5" y1="164" x2="183.5" y2="614" stroke="#a4a4a4"/><line x1="198.5" y1="164" x2="198.5" y2="614" stroke="#a4a4a4" stroke-dasharray="4,2"/><line x1="213.5" y1="164" x2="213.5" y2="614" stroke="#a4a4a4" stroke-dasharray="4,2"/><line x1="228.5" y1="164" x2="228.5" y2="614" stroke="#a4a4a4" stroke-dasharray="4,2"/><line x1="243.5" y1="164" x2="243.5" y2="614" stroke="#a4a4a4" stroke-dasharray="4,2"/><line x1="258.5" y1="164" x2="258.5" y2="614" stroke="#a4a4a4"/><line x1="273.5" y1="164" x2="273.5" y2="614" stroke="#a4a4a4" stroke-dasharray="4,2"/><line x1="288.5" y1="164" x2="288.5" y2="614" stroke="#a4a4a4" stroke-dasharray="4,2"/><line x1="303.5" y1="164" x2="303.5" y2="614" stroke="#a4a4a4" stroke-dasharray="4,2"/><line x1="318.5" y1="164" x2="318.5" y2="614" stroke="#a4a4a4" stroke-dasharray="4,2"/><line x1="333.5" y1="164" x2="333.5" y2="614" stroke="#a4a4a4"/><line x1="348.5" y1="164" x2="348.5" y2="614" stroke="#a4a4a4" stroke-dasharray="4,2"/><line x1="363.5" y1="164" x2="363.5" y2="614" stroke="#a4a4a4" stroke-dasharray="4,2"/><line x1="378.5" y1="164" x2="378.5" y2="614" stroke="#a4a4a4" stroke-dasharray="4,2"/><line x1="393.5" y1="164" x2="393.5" y2="614" stroke="#a4a4a4" stroke-dasharray="4,2"/><line x1="408.5" y1="164" x2="408.5" y2="614" stroke="#a4a4a4"/><line x1="423.5" y1="164" x2="423.5" y2="614" stroke="#a4a4a4" stroke-dasharray="4,2"/><line x1="438.5" y1="164" x2="438.5" y2="614" stroke="#a4a4a4" stroke-dasharray="4,2"/><line x1="453.5" y1="164" x2="453.5" y2="614" stroke="#a4a4a4" stroke-dasharray="4,2"/><line x1="468.5" y1="164" x2="468.5" y2="614" stroke="#a4a4a4" stroke-dasharray="4,2"/><line x1="483.5" y1="164" x2="483.5" y2="614" stroke="#a4a4a4"/><line x1="498.5" y1="164" x2="498.5" y2="614" stroke="#a4a4a4" stroke-dasharray="4,2"/><line x1="513.5" y1="164" x2="513.5" y2="614" stroke="#a4a4a4" stroke-dasharray="4,2"/><line x1="528.5" y1="164" x2="528.5" y2="614" stroke="#a4a4a4" stroke-dasharray="4,2"/><line x1="543.5" y1="164" x2="543.5" y2="614" stroke="#a4a4a4" stroke-dasharray="4,2"/><line x1="558.5" y1="164" x2="558.5" y2="614" stroke="#a4a4a4"/><line x1="573.5" y1="164" x2="573.5" y2="614" stroke="#a4a4a4" stroke-dasharray="4,2"/><line x1="588.5" y1="164" x2="588.5" y2="614" stroke="#a4a4a4" stroke-dasharray="4,2"/><line x1="603.5" y1="164" x2="603.5" y2="614" stroke="#a4a4a4" stroke-dasharray="4,2"/><line x1="618.5" y1="164" x2="618.5" y2="614" stroke="#a4a4a4" stroke-dasharray="4,2"/><line x1="633.5" y1="164" x2="633.5" y2="614" stroke="#a4a4a4"/><line x1="648.5" y1="164" x2="648.5" y2="614" stroke="#a4a4a4" stroke-dasharray="4,2"/><line x1="663.5" y1="164" x2="663.5" y2="614" stroke="#a4a4a4" stroke-dasharray="4,2"/><line x1="678.5" y1="164" x2="678.5" y2="614" stroke="#a4a4a4" stroke-dasharray="4,2"/><line x1="693.5" y1="164" x2="693.5" y2="614" stroke="#a4a4a4" stroke-dasharray="4,2"/><line x1="108" y1="182.5" x2="708" y2="182.5" stroke="#a4a4a4" stroke-dasharray="4,2"/><line x1="108" y1="200.5" x2="708" y2="200.5" stroke="#a4a4a4" stroke-dasharray="4,2"/><line x1="108" y1="218.5" x2="708" y2="218.5" stroke="#a4a4a4" stroke-dasharray="4,2"/><line x1="108" y1="236.5" x2="708" y2="236.5" stroke="#a4a4a4" stroke-dasharray="4,2"/><line x1="108" y1="254.5" x2="708" y2="254.5" stroke="#a4a4a4"/><line x1="108" y1="272.5" x2="708" y2="272.5" stroke="#a4a4a4" stroke-dasharray="4,2"/><line x1="108" y1="290.5" x2="708" y2="290.5" stroke="#a4a4a4" stroke-dasharray="4,2"/><line x1="108" y1="308.5" x2="708" y2="308.5" stroke="#a4a4a4" stroke-dasharray="4,2"/><line x1="108" y1="326.5" x2="708" y2="326.5" stroke="#a4a4a4" stroke-dasharray="4,2"/><line x1="108" y1="344.5" x2="708" y2="344.5" stroke="#a4a4a4"/><line x1="108" y1="362.5" x2="708" y2="362.5" stroke="#a4a4a4" stroke-dasharray="4,2"/><line x1="108" y1="380.5" x2="708" y2="380.5" stroke="#a4a4a4" stroke-dasharray="4,2"/><line x1="108" y1="398.5" x2="708" y2="398.5" stroke="#a4a4a4" stroke-dasharray="4,2"/><line x1="108" y1="416.5" x2="708" y2="416.5" stroke="#a4a4a4" stroke-dasharray="4,2"/><line x1="108" y1="434.5" x2="708" y2="434.5" stroke="#a4a4a4"/><line x1="108" y1="452.5" x2="708" y2="452.5" stroke="#a4a4a4" stroke-dasharray="4,2"/><line x1="108" y1="470.5" x2="708" y2="470.5" stroke="#a4a4a4" stroke-dasharray="4,2"/><line x1="108" y1="488.5" x2="708" y2="488.5" stroke="#a4a4a4" stroke-dasharray="4,2"/><line x1="108" y1="506.5" x2="708" y2="506.5" stroke="#a4a4a4" stroke-dasharray="4,2"/><line x1="108" y1="524.5" x2="708" y2="524.5" stroke="#a4a4a4"/><line x1="108" y1="542.5" x2="708" y2="542.5" stroke="#a4a4a4" stroke-dasharray="4,2"/><line x1="108" y1="560.5" x2="708" y2="560.5" stroke="#a4a4a4" stroke-dasharray="4,2"/><line x1="108" y1="578.5" x2="708" y2="578.5" stroke="#a4a4a4" stroke-dasharray="4,2"/><line x1="108" y1="596.5" x2="708" y2="596.5" stroke="#a4a4a4" stroke-dasharray="4,2"/><path d="M108,164.5 H709 M108,614.5 H709 M709.5,164 V615 M107.5,164 V615 M108.5,164 v-9 M108.5,615 v9 M123.5,164 v-5 M123.5,615 v5 M138.5,164 v-5 M138.5,615 v5 M153.5,164 v-5 M153.5,615 v5 M168.5,164 v-5 M168.5,615 v5 M183.5,164 v-9 M183.5,615 v9 M198.5,164 v-5 M198.5,615 v5 M213.5,164 v-5 M213.5,615 v5 M228.5,164 v-5 M228.5,615 v5 M243.5,164 v-5 M243.5,615 v5 M258.5,164 v-9 M258.5,615 v9 M273.5,164 v-5 M273.5,615 v5 M288.5,164 v-5 M288.5,615 v5 M303.5,164 v-5 M303.5,615 v5 M318.5,164 v-5 M318.5,615 v5 M333.5,164 v-9 M333.5,615 v9 M348.5,164 v-5 M348.5,615 v5 M363.5,164 v-5 M363.5,615 v5 M378.5,164 v-5 M378.5,615 v5 M393.5,164 v-5 M393.5,615 v5 M408.5,164 v-9 M408.5,615 v9 M423.5,164 v-5 M423.5,615 v5 M438.5,164 v-5 M438.5,615 v5 M453.5,164 v-5 M453.5,615 v5 M468.5,164 v-5 M468.5,615 v5 M483.5,164 v-9 M483.5,615 v9 M498.5,164 v-5 M498.5,615 v5 M513.5,164 v-5 M513.5,615 v5 M528.5,164 v-5 M528.5,615 v5 M543.5,164 v-5 M543.5,615 v5 M558.5,164 v-9 M558.5,615 v9 M573.5,164 v-5 M573.5,615 v5 M588.5,164 v-5 M588.5,615 v5 M603.5,164 v-5 M603.5,615 v5 M618.5,164 v-5 M618.5,615 v5 M633.5,164 v-9 M633.5,615 v9 M648.5,164 v-5 M648.5,615 v5 M663.5,164 v-5 M663.5,615 v5 M678.5,164 v-5 M678.5,615 v5 M693.5,164 v-5 M693.5,615 v5 M708.5,164 v-9 M708.5,615 v9 M710,164.5 h9 M710,182.5 h5 M710,200.5 h5 M710,218.5 h5 M710,236.5 h5 M710,254.5 h9 M710,272.5 h5 M710,290.5 h5 M710,308.5 h5 M710,326.5 h5 M710,344.5 h9 M710,362.5 h5 M710,380.5 h5 M710,398.5 h5 M710,416.5 h5 M710,434.5 h9 M710,452.5 h5 M710,470.5 h5 M710,488.5 h5 M710,506.5 h5 M710,524.5 h9 M710,542.5 h5 M710,560.5 h5 M710,578.5 h5 M710,596.5 h5 M710,614.5 h9" stroke="#000" stroke-width="1.6" fill="none"/><g font-family='"Liberation Sans",sans-serif' font-size="16.5" fill="#000"><text x="108.70000000000009" y="147" text-anchor="middle" letter-spacing="0.6">100</text><text x="108.70000000000009" y="645" text-anchor="middle" letter-spacing="0.6">100</text><text x="183.7000000000001" y="147" text-anchor="middle" letter-spacing="0.6">200</text><text x="183.7000000000001" y="645" text-anchor="middle" letter-spacing="0.6">200</text><text x="258.7000000000001" y="147" text-anchor="middle" letter-spacing="0.6">300</text><text x="258.7000000000001" y="645" text-anchor="middle" letter-spacing="0.6">300</text><text x="333.7000000000001" y="147" text-anchor="middle" letter-spacing="0.6">400</text><text x="333.7000000000001" y="645" text-anchor="middle" letter-spacing="0.6">400</text><text x="408.7000000000001" y="147" text-anchor="middle" letter-spacing="0.6">500</text><text x="408.7000000000001" y="645" text-anchor="middle" letter-spacing="0.6">500</text><text x="483.7000000000001" y="147" text-anchor="middle" letter-spacing="0.6">600</text><text x="483.7000000000001" y="645" text-anchor="middle" letter-spacing="0.6">600</text><text x="558.7" y="147" text-anchor="middle" letter-spacing="0.6">700</text><text x="558.7" y="645" text-anchor="middle" letter-spacing="0.6">700</text><text x="633.7" y="147" text-anchor="middle" letter-spacing="0.6">800</text><text x="633.7" y="645" text-anchor="middle" letter-spacing="0.6">800</text><text x="708.7" y="147" text-anchor="middle" letter-spacing="0.6">900</text><text x="708.7" y="645" text-anchor="middle" letter-spacing="0.6">900</text><text x="723" y="171.0" letter-spacing="0.9">0,2</text><text x="723" y="260.99999999999994" letter-spacing="0.9">0,18</text><text x="723" y="351.0" letter-spacing="0.9">0,16</text><text x="723" y="441.0" letter-spacing="0.9">0,14</text><text x="723" y="531.0" letter-spacing="0.9">0,12</text><text x="723" y="621.0" letter-spacing="0.9">0,1</text></g><text x="645" y="99" text-anchor="end" font-family='"Liberation Sans",sans-serif' font-size="21" font-weight="bold" letter-spacing="0.95">Vtot en fonction du temps (pente+horz 4)</text><text x="408" y="125" text-anchor="middle" font-family='"Liberation Sans",sans-serif' font-size="17" font-weight="bold">t</text><text transform="translate(777,388) rotate(-90)" text-anchor="middle" font-family='"Liberation Sans",sans-serif' font-size="17" font-weight="bold">Vtot</text><polyline points="380.0,407.0 442.6,323.5 455.3,297.5 465.5,269.4 480.8,246.5 496.6,232.4 503.8,232.4 512.2,233.7 526.7,243.9 542.0,253.6 556.3,255.4 571.1,268.9 586.1,296.2 600.7,345.9 616.0,363.5 633.8,407.1 662.3,469.7" fill="none" stroke="#e81818" stroke-width="1.1"/><polyline points="380.0,337.0 442.6,305.6 465.5,290.3 496.6,274.5 511.4,270.4 526.7,269.7 542.0,272.5 556.3,287.3 571.1,303.3 595.6,328.1 616.0,347.2 633.8,366.3 661.9,404.6" fill="none" stroke="#e81818" stroke-width="1.1"/><circle cx="451.2" cy="293.2" r="4.2" fill="#000"/><circle cx="466.3" cy="290.3" r="4.2" fill="#000"/><circle cx="481.3" cy="228.4" r="4.2" fill="#000"/><circle cx="496.4" cy="209.2" r="4.2" fill="#000"/><circle cx="511.4" cy="225.3" r="4.2" fill="#000"/><circle cx="526.2" cy="257.2" r="4.2" fill="#000"/><circle cx="541.2" cy="260.3" r="4.2" fill="#000"/><circle cx="556.3" cy="254.1" r="4.2" fill="#000"/><circle cx="571.1" cy="251.1" r="4.2" fill="#000"/><circle cx="586.1" cy="269.4" r="4.2" fill="#000"/><circle cx="601.2" cy="353.3" r="4.2" fill="#000"/><circle cx="616.2" cy="456.1" r="4.2" fill="#000"/><circle cx="631.3" cy="307.4" r="4.2" fill="#000"/><circle cx="646.3" cy="404.1" r="4.2" fill="#000"/><circle cx="661.1" cy="494.0" r="4.2" fill="#000"/><rect x="699" y="164" width="10" height="10" fill="#000"/><rect x="699" y="383" width="10" height="10" fill="#000"/><rect x="699" y="603" width="10" height="10" fill="#000"/></svg>
<div style="position:absolute;left:0px;top:153px;width:1000px;height:728px;background:linear-gradient(to bottom,#bdcbdc 0px,#d8e4f1 44px,#d6e3f0 45px,#d6e3f0 100%);border:1px solid #3c3c3c;border-top-color:#3c3c3c;border-radius:7px 7px 0 0;"></div>
<div style="position:absolute;left:7px;top:198px;width:986px;height:676px;background:#fff;border:1px solid #7d8593;"></div>
<svg style="position:absolute;left:15px;top:170px;" width="20" height="20" viewBox="0 0 20 20"><rect x="0" y="0" width="20" height="20" fill="#1a1a1a" rx="1"/><rect x="2.0" y="3.0" width="2.6" height="2.6" fill="#fff"/><rect x="2.0" y="7.3" width="2.6" height="2.6" fill="#fff"/><rect x="2.0" y="11.6" width="2.6" height="2.6" fill="#fff"/><rect x="2.0" y="15.9" width="2.6" height="2.6" fill="#fff"/><rect x="6.5" y="3.0" width="2.6" height="2.6" fill="#fff"/><rect x="6.5" y="7.3" width="2.6" height="2.6" fill="#fff"/><rect x="6.5" y="11.6" width="2.6" height="2.6" fill="#fff"/><rect x="6.5" y="15.9" width="2.6" height="2.6" fill="#fff"/><rect x="11.0" y="3.0" width="2.6" height="2.6" fill="#fff"/><rect x="11.0" y="7.3" width="2.6" height="2.6" fill="#fff"/><rect x="11.0" y="11.6" width="2.6" height="2.6" fill="#fff"/><rect x="11.0" y="15.9" width="2.6" height="2.6" fill="#fff"/><rect x="15.5" y="3.0" width="2.6" height="2.6" fill="#fff"/><rect x="15.5" y="7.3" width="2.6" height="2.6" fill="#fff"/><rect x="15.5" y="11.6" width="2.6" height="2.6" fill="#fff"/><rect x="15.5" y="15.9" width="2.6" height="2.6" fill="#fff"/><rect x="1" y="1" width="18" height="2" fill="#3a4a66"/></svg>
<div style="position:absolute;left:46px;top:172px;font-size:18px;line-height:1;color:#000;font-weight:normal;white-space:nowrap;letter-spacing:0.33px;">penthorz4DONNES − C:/Users/amine/Desktop/donneesdesreleves/penthorz4DONNES.txt</div>
<div style="position:absolute;left:8px;top:199px;width:635px;height:673px;background:#fff;"></div>
<div style="position:absolute;left:43px;top:232px;width:100px;height:640px;background:#f0f0f0;"></div>
<div style="position:absolute;left:543px;top:232px;width:100px;height:640px;background:#f0f0f0;"></div>
<div style="position:absolute;left:43px;top:199px;width:1px;height:673px;background:#dedede;"></div>
<div style="position:absolute;left:143px;top:199px;width:1px;height:673px;background:#dedede;"></div>
<div style="position:absolute;left:243px;top:199px;width:1px;height:673px;background:#dedede;"></div>
<div style="position:absolute;left:343px;top:199px;width:1px;height:673px;background:#dedede;"></div>
<div style="position:absolute;left:443px;top:199px;width:1px;height:673px;background:#dedede;"></div>
<div style="position:absolute;left:543px;top:199px;width:1px;height:673px;background:#dedede;"></div>
<div style="position:absolute;left:643px;top:199px;width:1px;height:673px;background:#dedede;"></div>
<div style="position:absolute;left:43px;top:263px;width:600px;height:1px;background:#dedede;"></div>
<div style="position:absolute;left:43px;top:295px;width:600px;height:1px;background:#dedede;"></div>
<div style="position:absolute;left:43px;top:327px;width:600px;height:1px;background:#dedede;"></div>
<div style="position:absolute;left:43px;top:359px;width:600px;height:1px;background:#dedede;"></div>
<div style="position:absolute;left:43px;top:391px;width:600px;height:1px;background:#dedede;"></div>
<div style="position:absolute;left:43px;top:423px;width:600px;height:1px;background:#dedede;"></div>
<div style="position:absolute;left:43px;top:455px;width:600px;height:1px;background:#dedede;"></div>
<div style="position:absolute;left:43px;top:487px;width:600px;height:1px;background:#dedede;"></div>
<div style="position:absolute;left:43px;top:519px;width:600px;height:1px;background:#dedede;"></div>
<div style="position:absolute;left:43px;top:551px;width:600px;height:1px;background:#dedede;"></div>
<div style="position:absolute;left:43px;top:583px;width:600px;height:1px;background:#dedede;"></div>
<div style="position:absolute;left:43px;top:615px;width:600px;height:1px;background:#dedede;"></div>
<div style="position:absolute;left:43px;top:647px;width:600px;height:1px;background:#dedede;"></div>
<div style="position:absolute;left:43px;top:679px;width:600px;height:1px;background:#dedede;"></div>
<div style="position:absolute;left:43px;top:711px;width:600px;height:1px;background:#dedede;"></div>
<div style="position:absolute;left:43px;top:743px;width:600px;height:1px;background:#dedede;"></div>
<div style="position:absolute;left:43px;top:775px;width:600px;height:1px;background:#dedede;"></div>
<div style="position:absolute;left:43px;top:807px;width:600px;height:1px;background:#dedede;"></div>
<div style="position:absolute;left:43px;top:839px;width:600px;height:1px;background:#dedede;"></div>
<div style="position:absolute;left:43px;top:871px;width:600px;height:1px;background:#dedede;"></div>
<div style="position:absolute;left:43px;top:207px;width:100px;text-align:center;font-size:18px;line-height:1;white-space:nowrap;letter-spacing:0.6px;">t[X]</div>
<div style="position:absolute;left:143px;top:207px;width:100px;text-align:center;font-size:18px;line-height:1;white-space:nowrap;letter-spacing:0.6px;">X[Y]</div>
<div style="position:absolute;left:243px;top:207px;width:100px;text-align:center;font-size:18px;line-height:1;white-space:nowrap;letter-spacing:0.6px;">Y[Y]</div>
<div style="position:absolute;left:343px;top:207px;width:100px;text-align:center;font-size:18px;line-height:1;white-space:nowrap;letter-spacing:0.6px;">Vx[Y]</div>
<div style="position:absolute;left:443px;top:207px;width:100px;text-align:center;font-size:18px;line-height:1;white-space:nowrap;letter-spacing:0.6px;">Vy[Y]</div>
<div style="position:absolute;left:543px;top:207px;width:100px;text-align:center;font-size:18px;line-height:1;white-space:nowrap;letter-spacing:0.6px;">Vtot[Y]</div>
<div style="position:absolute;left:15px;top:240px;font-size:18px;line-height:1;color:#000;font-weight:bold;white-space:nowrap;letter-spacing:0.6px;">1</div>
<div style="position:absolute;left:47px;top:240px;font-size:18px;line-height:1;color:#000;font-weight:normal;white-space:nowrap;letter-spacing:0.6px;">37</div>
<div style="position:absolute;left:147px;top:240px;font-size:18px;line-height:1;color:#000;font-weight:normal;white-space:nowrap;letter-spacing:0.6px;">−12,42</div>
<div style="position:absolute;left:247px;top:240px;font-size:18px;line-height:1;color:#000;font-weight:normal;white-space:nowrap;letter-spacing:0.6px;">15,49</div>
<div style="position:absolute;left:15px;top:272px;font-size:18px;line-height:1;color:#000;font-weight:bold;white-space:nowrap;letter-spacing:0.6px;">2</div>
<div style="position:absolute;left:47px;top:272px;font-size:18px;line-height:1;color:#000;font-weight:normal;white-space:nowrap;letter-spacing:0.6px;">57</div>
<div style="position:absolute;left:147px;top:272px;font-size:18px;line-height:1;color:#000;font-weight:normal;white-space:nowrap;letter-spacing:0.6px;">−13,95</div>
<div style="position:absolute;left:247px;top:272px;font-size:18px;line-height:1;color:#000;font-weight:normal;white-space:nowrap;letter-spacing:0.6px;">15,91</div>
<div style="position:absolute;left:15px;top:304px;font-size:18px;line-height:1;color:#000;font-weight:bold;white-space:nowrap;letter-spacing:0.6px;">3</div>
<div style="position:absolute;left:47px;top:304px;font-size:18px;line-height:1;color:#000;font-weight:normal;white-space:nowrap;letter-spacing:0.6px;">77</div>
<div style="position:absolute;left:147px;top:304px;font-size:18px;line-height:1;color:#000;font-weight:normal;white-space:nowrap;letter-spacing:0.6px;">−15,77</div>
<div style="position:absolute;left:247px;top:304px;font-size:18px;line-height:1;color:#000;font-weight:normal;white-space:nowrap;letter-spacing:0.6px;">16,33</div>
<div style="position:absolute;left:15px;top:336px;font-size:18px;line-height:1;color:#000;font-weight:bold;white-space:nowrap;letter-spacing:0.6px;">4</div>
<div style="position:absolute;left:47px;top:336px;font-size:18px;line-height:1;color:#000;font-weight:normal;white-space:nowrap;letter-spacing:0.6px;">97</div>
<div style="position:absolute;left:147px;top:336px;font-size:18px;line-height:1;color:#000;font-weight:normal;white-space:nowrap;letter-spacing:0.6px;">−17,58</div>
<div style="position:absolute;left:247px;top:336px;font-size:18px;line-height:1;color:#000;font-weight:normal;white-space:nowrap;letter-spacing:0.6px;">16,74</div>
<div style="position:absolute;left:15px;top:368px;font-size:18px;line-height:1;color:#000;font-weight:bold;white-space:nowrap;letter-spacing:0.6px;">5</div>
<div style="position:absolute;left:47px;top:368px;font-size:18px;line-height:1;color:#000;font-weight:normal;white-space:nowrap;letter-spacing:0.6px;">117</div>
<div style="position:absolute;left:147px;top:368px;font-size:18px;line-height:1;color:#000;font-weight:normal;white-space:nowrap;letter-spacing:0.6px;">−19,53</div>
<div style="position:absolute;left:247px;top:368px;font-size:18px;line-height:1;color:#000;font-weight:normal;white-space:nowrap;letter-spacing:0.6px;">17,02</div>
<div style="position:absolute;left:15px;top:400px;font-size:18px;line-height:1;color:#000;font-weight:bold;white-space:nowrap;letter-spacing:0.6px;">6</div>
<div style="position:absolute;left:47px;top:400px;font-size:18px;line-height:1;color:#000;font-weight:normal;white-space:nowrap;letter-spacing:0.6px;">137</div>
<div style="position:absolute;left:147px;top:400px;font-size:18px;line-height:1;color:#000;font-weight:normal;white-space:nowrap;letter-spacing:0.6px;">−21,63</div>
<div style="position:absolute;left:247px;top:400px;font-size:18px;line-height:1;color:#000;font-weight:normal;white-space:nowrap;letter-spacing:0.6px;">17,3</div>
<div style="position:absolute;left:347px;top:400px;font-size:18px;line-height:1;color:#000;font-weight:normal;white-space:nowrap;letter-spacing:0.6px;">−0,1xxxx</div>
<div style="position:absolute;left:15px;top:432px;font-size:18px;line-height:1;color:#000;font-weight:bold;white-space:nowrap;letter-spacing:0.6px;">7</div>
<div style="position:absolute;left:47px;top:432px;font-size:18px;line-height:1;color:#000;font-weight:normal;white-space:nowrap;letter-spacing:0.6px;">157</div>
<div style="position:absolute;left:147px;top:432px;font-size:18px;line-height:1;color:#000;font-weight:normal;white-space:nowrap;letter-spacing:0.6px;">−24,28</div>
<div style="position:absolute;left:247px;top:432px;font-size:18px;line-height:1;color:#000;font-weight:normal;white-space:nowrap;letter-spacing:0.6px;">17,44</div>
<div style="position:absolute;left:347px;top:432px;font-size:18px;line-height:1;color:#000;font-weight:normal;white-space:nowrap;letter-spacing:0.6px;">−0,1xxxx</div>
<div style="position:absolute;left:15px;top:464px;font-size:18px;line-height:1;color:#000;font-weight:bold;white-space:nowrap;letter-spacing:0.6px;">8</div>
<div style="position:absolute;left:47px;top:464px;font-size:18px;line-height:1;color:#000;font-weight:normal;white-space:nowrap;letter-spacing:0.6px;">177</div>
<div style="position:absolute;left:147px;top:464px;font-size:18px;line-height:1;color:#000;font-weight:normal;white-space:nowrap;letter-spacing:0.6px;">−26,65</div>
<div style="position:absolute;left:247px;top:464px;font-size:18px;line-height:1;color:#000;font-weight:normal;white-space:nowrap;letter-spacing:0.6px;">17,58</div>
<div style="position:absolute;left:347px;top:464px;font-size:18px;line-height:1;color:#000;font-weight:normal;white-space:nowrap;letter-spacing:0.6px;">−0,1xxxx</div>
<div style="position:absolute;left:15px;top:496px;font-size:18px;line-height:1;color:#000;font-weight:bold;white-space:nowrap;letter-spacing:0.6px;">9</div>
<div style="position:absolute;left:47px;top:496px;font-size:18px;line-height:1;color:#000;font-weight:normal;white-space:nowrap;letter-spacing:0.6px;">197</div>
<div style="position:absolute;left:147px;top:496px;font-size:18px;line-height:1;color:#000;font-weight:normal;white-space:nowrap;letter-spacing:0.6px;">−29,16</div>
<div style="position:absolute;left:247px;top:496px;font-size:18px;line-height:1;color:#000;font-weight:normal;white-space:nowrap;letter-spacing:0.6px;">17,72</div>
<div style="position:absolute;left:347px;top:496px;font-size:18px;line-height:1;color:#000;font-weight:normal;white-space:nowrap;letter-spacing:0.6px;">−0,1xxxx</div>
<div style="position:absolute;left:15px;top:528px;font-size:18px;line-height:1;color:#000;font-weight:bold;white-space:nowrap;letter-spacing:0.6px;">10</div>
<div style="position:absolute;left:47px;top:528px;font-size:18px;line-height:1;color:#000;font-weight:normal;white-space:nowrap;letter-spacing:0.6px;">217</div>
<div style="position:absolute;left:147px;top:528px;font-size:18px;line-height:1;color:#000;font-weight:normal;white-space:nowrap;letter-spacing:0.6px;">−31,26</div>
<div style="position:absolute;left:247px;top:528px;font-size:18px;line-height:1;color:#000;font-weight:normal;white-space:nowrap;letter-spacing:0.6px;">18</div>
<div style="position:absolute;left:347px;top:528px;font-size:18px;line-height:1;color:#000;font-weight:normal;white-space:nowrap;letter-spacing:0.6px;">−0,1xxxx</div>
<div style="position:absolute;left:15px;top:560px;font-size:18px;line-height:1;color:#000;font-weight:bold;white-space:nowrap;letter-spacing:0.6px;">11</div>
<div style="position:absolute;left:47px;top:560px;font-size:18px;line-height:1;color:#000;font-weight:normal;white-space:nowrap;letter-spacing:0.6px;">237</div>
<div style="position:absolute;left:147px;top:560px;font-size:18px;line-height:1;color:#000;font-weight:normal;white-space:nowrap;letter-spacing:0.6px;">−33,91</div>
<div style="position:absolute;left:247px;top:560px;font-size:18px;line-height:1;color:#000;font-weight:normal;white-space:nowrap;letter-spacing:0.6px;">18</div>
<div style="position:absolute;left:347px;top:560px;font-size:18px;line-height:1;color:#000;font-weight:normal;white-space:nowrap;letter-spacing:0.6px;">−0,1xxxx</div>
<div style="position:absolute;left:15px;top:592px;font-size:18px;line-height:1;color:#000;font-weight:bold;white-space:nowrap;letter-spacing:0.6px;">12</div>
<div style="position:absolute;left:47px;top:592px;font-size:18px;line-height:1;color:#000;font-weight:normal;white-space:nowrap;letter-spacing:0.6px;">257</div>
<div style="position:absolute;left:147px;top:592px;font-size:18px;line-height:1;color:#000;font-weight:normal;white-space:nowrap;letter-spacing:0.6px;">−36,56</div>
<div style="position:absolute;left:247px;top:592px;font-size:18px;line-height:1;color:#000;font-weight:normal;white-space:nowrap;letter-spacing:0.6px;">18,14</div>
<div style="position:absolute;left:347px;top:592px;font-size:18px;line-height:1;color:#000;font-weight:normal;white-space:nowrap;letter-spacing:0.6px;">−0,1xxxx</div>
<div style="position:absolute;left:15px;top:624px;font-size:18px;line-height:1;color:#000;font-weight:bold;white-space:nowrap;letter-spacing:0.6px;">13</div>
<div style="position:absolute;left:47px;top:624px;font-size:18px;line-height:1;color:#000;font-weight:normal;white-space:nowrap;letter-spacing:0.6px;">277</div>
<div style="position:absolute;left:147px;top:624px;font-size:18px;line-height:1;color:#000;font-weight:normal;white-space:nowrap;letter-spacing:0.6px;">−39,49</div>
<div style="position:absolute;left:247px;top:624px;font-size:18px;line-height:1;color:#000;font-weight:normal;white-space:nowrap;letter-spacing:0.6px;">18,14</div>
<div style="position:absolute;left:347px;top:624px;font-size:18px;line-height:1;color:#000;font-weight:normal;white-space:nowrap;letter-spacing:0.6px;">−0,1xxxx</div>
<div style="position:absolute;left:15px;top:656px;font-size:18px;line-height:1;color:#000;font-weight:bold;white-space:nowrap;letter-spacing:0.6px;">14</div>
<div style="position:absolute;left:47px;top:656px;font-size:18px;line-height:1;color:#000;font-weight:normal;white-space:nowrap;letter-spacing:0.6px;">297</div>
<div style="position:absolute;left:147px;top:656px;font-size:18px;line-height:1;color:#000;font-weight:normal;white-space:nowrap;letter-spacing:0.6px;">−42</div>
<div style="position:absolute;left:247px;top:656px;font-size:18px;line-height:1;color:#000;font-weight:normal;white-space:nowrap;letter-spacing:0.6px;">18,28</div>
<div style="position:absolute;left:347px;top:656px;font-size:18px;line-height:1;color:#000;font-weight:normal;white-space:nowrap;letter-spacing:0.6px;">−0,1xxxx</div>
<div style="position:absolute;left:15px;top:688px;font-size:18px;line-height:1;color:#000;font-weight:bold;white-space:nowrap;letter-spacing:0.6px;">15</div>
<div style="position:absolute;left:47px;top:688px;font-size:18px;line-height:1;color:#000;font-weight:normal;white-space:nowrap;letter-spacing:0.6px;">317</div>
<div style="position:absolute;left:147px;top:688px;font-size:18px;line-height:1;color:#000;font-weight:normal;white-space:nowrap;letter-spacing:0.6px;">−45,07</div>
<div style="position:absolute;left:247px;top:688px;font-size:18px;line-height:1;color:#000;font-weight:normal;white-space:nowrap;letter-spacing:0.6px;">18,42</div>
<div style="position:absolute;left:347px;top:688px;font-size:18px;line-height:1;color:#000;font-weight:normal;white-space:nowrap;letter-spacing:0.6px;">−0,1xxxx</div>
<div style="position:absolute;left:15px;top:720px;font-size:18px;line-height:1;color:#000;font-weight:bold;white-space:nowrap;letter-spacing:0.6px;">16</div>
<div style="position:absolute;left:47px;top:720px;font-size:18px;line-height:1;color:#000;font-weight:normal;white-space:nowrap;letter-spacing:0.6px;">337</div>
<div style="position:absolute;left:147px;top:720px;font-size:18px;line-height:1;color:#000;font-weight:normal;white-space:nowrap;letter-spacing:0.6px;">−47,3</div>
<div style="position:absolute;left:247px;top:720px;font-size:18px;line-height:1;color:#000;font-weight:normal;white-space:nowrap;letter-spacing:0.6px;">18,56</div>
<div style="position:absolute;left:347px;top:720px;font-size:18px;line-height:1;color:#000;font-weight:normal;white-space:nowrap;letter-spacing:0.6px;">−0,1xxxx</div>
<div style="position:absolute;left:15px;top:752px;font-size:18px;line-height:1;color:#000;font-weight:bold;white-space:nowrap;letter-spacing:0.6px;">17</div>
<div style="position:absolute;left:47px;top:752px;font-size:18px;line-height:1;color:#000;font-weight:normal;white-space:nowrap;letter-spacing:0.6px;">357</div>
<div style="position:absolute;left:147px;top:752px;font-size:18px;line-height:1;color:#000;font-weight:normal;white-space:nowrap;letter-spacing:0.6px;">−49,67</div>
<div style="position:absolute;left:247px;top:752px;font-size:18px;line-height:1;color:#000;font-weight:normal;white-space:nowrap;letter-spacing:0.6px;">18,7</div>
<div style="position:absolute;left:347px;top:752px;font-size:18px;line-height:1;color:#000;font-weight:normal;white-space:nowrap;letter-spacing:0.6px;">−0,1xxxx</div>
<div style="position:absolute;left:15px;top:784px;font-size:18px;line-height:1;color:#000;font-weight:bold;white-space:nowrap;letter-spacing:0.6px;">18</div>
<div style="position:absolute;left:47px;top:784px;font-size:18px;line-height:1;color:#000;font-weight:normal;white-space:nowrap;letter-spacing:0.6px;">377</div>
<div style="position:absolute;left:147px;top:784px;font-size:18px;line-height:1;color:#000;font-weight:normal;white-space:nowrap;letter-spacing:0.6px;">−55,67</div>
<div style="position:absolute;left:247px;top:784px;font-size:18px;line-height:1;color:#000;font-weight:normal;white-space:nowrap;letter-spacing:0.6px;">17,86</div>
<div style="position:absolute;left:347px;top:784px;font-size:18px;line-height:1;color:#000;font-weight:normal;white-space:nowrap;letter-spacing:0.6px;">−0,1xxxx</div>
<div style="position:absolute;left:15px;top:816px;font-size:18px;line-height:1;color:#000;font-weight:bold;white-space:nowrap;letter-spacing:0.6px;">19</div>
<div style="position:absolute;left:47px;top:816px;font-size:18px;line-height:1;color:#000;font-weight:normal;white-space:nowrap;letter-spacing:0.6px;">397</div>
<div style="position:absolute;left:147px;top:816px;font-size:18px;line-height:1;color:#000;font-weight:normal;white-space:nowrap;letter-spacing:0.6px;">−58,19</div>
<div style="position:absolute;left:247px;top:816px;font-size:18px;line-height:1;color:#000;font-weight:normal;white-space:nowrap;letter-spacing:0.6px;">18</div>
<div style="position:absolute;left:347px;top:816px;font-size:18px;line-height:1;color:#000;font-weight:normal;white-space:nowrap;letter-spacing:0.6px;">−0,1xxxx</div>
<div style="position:absolute;left:15px;top:848px;font-size:18px;line-height:1;color:#000;font-weight:bold;white-space:nowrap;letter-spacing:0.6px;">20</div>
<div style="position:absolute;left:47px;top:848px;font-size:18px;line-height:1;color:#000;font-weight:normal;white-space:nowrap;letter-spacing:0.6px;">417</div>
<div style="position:absolute;left:147px;top:848px;font-size:18px;line-height:1;color:#000;font-weight:normal;white-space:nowrap;letter-spacing:0.6px;">−61,26</div>
<div style="position:absolute;left:247px;top:848px;font-size:18px;line-height:1;color:#000;font-weight:normal;white-space:nowrap;letter-spacing:0.6px;">18</div>
<div style="position:absolute;left:347px;top:848px;font-size:18px;line-height:1;color:#000;font-weight:normal;white-space:nowrap;letter-spacing:0.6px;">−0,1xxxx</div>
<div style="position:absolute;left:385px;top:309px;width:1058px;height:760px;background:linear-gradient(to bottom,#bdcbdc 0px,#d8e4f1 44px,#d6e3f0 45px,#d6e3f0 100%);border:1px solid #3c3c3c;border-top-color:#3c3c3c;border-radius:7px 7px 0 0;"></div>
<div style="position:absolute;left:392px;top:354px;width:1044px;height:708px;background:#fff;border:1px solid #7d8593;"></div>
<svg style="position:absolute;left:400px;top:327px;" width="20" height="20" viewBox="0 0 20 20"><rect x="0" y="0" width="20" height="20" fill="#1a1a1a" rx="1"/><rect x="2.0" y="3.0" width="2.6" height="2.6" fill="#fff"/><rect x="2.0" y="7.3" width="2.6" height="2.6" fill="#fff"/><rect x="2.0" y="11.6" width="2.6" height="2.6" fill="#fff"/><rect x="2.0" y="15.9" width="2.6" height="2.6" fill="#fff"/><rect x="6.5" y="3.0" width="2.6" height="2.6" fill="#fff"/><rect x="6.5" y="7.3" width="2.6" height="2.6" fill="#fff"/><rect x="6.5" y="11.6" width="2.6" height="2.6" fill="#fff"/><rect x="6.5" y="15.9" width="2.6" height="2.6" fill="#fff"/><rect x="11.0" y="3.0" width="2.6" height="2.6" fill="#fff"/><rect x="11.0" y="7.3" width="2.6" height="2.6" fill="#fff"/><rect x="11.0" y="11.6" width="2.6" height="2.6" fill="#fff"/><rect x="11.0" y="15.9" width="2.6" height="2.6" fill="#fff"/><rect x="15.5" y="3.0" width="2.6" height="2.6" fill="#fff"/><rect x="15.5" y="7.3" width="2.6" height="2.6" fill="#fff"/><rect x="15.5" y="11.6" width="2.6" height="2.6" fill="#fff"/><rect x="15.5" y="15.9" width="2.6" height="2.6" fill="#fff"/><rect x="1" y="1" width="18" height="2" fill="#3a4a66"/></svg>
<div style="position:absolute;left:431px;top:328px;font-size:18px;line-height:1;color:#000;font-weight:normal;white-space:nowrap;letter-spacing:0.33px;">penthorz5DONNES − C:/Users/amine/Desktop/donneesdesreleves/penthorz5DONNES.txt</div>
<div style="position:absolute;left:1379px;top:322px;width:50px;height:29px;background:linear-gradient(to bottom,#c6d3e2 0%,#c3d0e0 50%,#c5d3e3 80%,#cfdcea 100%);border:1px solid #8a9ab2;border-radius:3px;"></div>
<svg style="position:absolute;left:1395px;top:328px;" width="18" height="16" viewBox="0 0 18 16"><path d="M4,3 L14,13 M14,3 L4,13" stroke="#4a4a4a" stroke-width="6.5" stroke-linecap="round"/><path d="M4,3 L14,13 M14,3 L4,13" stroke="#f4f4f4" stroke-width="4.2" stroke-linecap="round"/></svg>
<div style="position:absolute;left:393px;top:355px;width:635px;height:673px;background:#fff;"></div>
<div style="position:absolute;left:428px;top:388px;width:100px;height:640px;background:#f0f0f0;"></div>
<div style="position:absolute;left:928px;top:388px;width:100px;height:640px;background:#f0f0f0;"></div>
<div style="position:absolute;left:428px;top:355px;width:1px;height:673px;background:#dedede;"></div>
<div style="position:absolute;left:528px;top:355px;width:1px;height:673px;background:#dedede;"></div>
<div style="position:absolute;left:628px;top:355px;width:1px;height:673px;background:#dedede;"></div>
<div style="position:absolute;left:728px;top:355px;width:1px;height:673px;background:#dedede;"></div>
<div style="position:absolute;left:828px;top:355px;width:1px;height:673px;background:#dedede;"></div>
<div style="position:absolute;left:928px;top:355px;width:1px;height:673px;background:#dedede;"></div>
<div style="position:absolute;left:1028px;top:355px;width:1px;height:673px;background:#dedede;"></div>
<div style="position:absolute;left:428px;top:419px;width:600px;height:1px;background:#dedede;"></div>
<div style="position:absolute;left:428px;top:451px;width:600px;height:1px;background:#dedede;"></div>
<div style="position:absolute;left:428px;top:483px;width:600px;height:1px;background:#dedede;"></div>
<div style="position:absolute;left:428px;top:515px;width:600px;height:1px;background:#dedede;"></div>
<div style="position:absolute;left:428px;top:547px;width:600px;height:1px;background:#dedede;"></div>
<div style="position:absolute;left:428px;top:579px;width:600px;height:1px;background:#dedede;"></div>
<div style="position:absolute;left:428px;top:611px;width:600px;height:1px;background:#dedede;"></div>
<div style="position:absolute;left:428px;top:643px;width:600px;height:1px;background:#dedede;"></div>
<div style="position:absolute;left:428px;top:675px;width:600px;height:1px;background:#dedede;"></div>
<div style="position:absolute;left:428px;top:707px;width:600px;height:1px;background:#dedede;"></div>
<div style="position:absolute;left:428px;top:739px;width:600px;height:1px;background:#dedede;"></div>
<div style="position:absolute;left:428px;top:771px;width:600px;height:1px;background:#dedede;"></div>
<div style="position:absolute;left:428px;top:803px;width:600px;height:1px;background:#dedede;"></div>
<div style="position:absolute;left:428px;top:835px;width:600px;height:1px;background:#dedede;"></div>
<div style="position:absolute;left:428px;top:867px;width:600px;height:1px;background:#dedede;"></div>
<div style="position:absolute;left:428px;top:899px;width:600px;height:1px;background:#dedede;"></div>
<div style="position:absolute;left:428px;top:931px;width:600px;height:1px;background:#dedede;"></div>
<div style="position:absolute;left:428px;top:963px;width:600px;height:1px;background:#dedede;"></div>
<div style="position:absolute;left:428px;top:995px;width:600px;height:1px;background:#dedede;"></div>
<div style="position:absolute;left:428px;top:1027px;width:600px;height:1px;background:#dedede;"></div>
<div style="position:absolute;left:428px;top:363px;width:100px;text-align:center;font-size:18px;line-height:1;white-space:nowrap;letter-spacing:0.6px;">t[X]</div>
<div style="position:absolute;left:528px;top:363px;width:100px;text-align:center;font-size:18px;line-height:1;white-space:nowrap;letter-spacing:0.6px;">X[Y]</div>
<div style="position:absolute;left:628px;top:363px;width:100px;text-align:center;font-size:18px;line-height:1;white-space:nowrap;letter-spacing:0.6px;">Y[Y]</div>
<div style="position:absolute;left:728px;top:363px;width:100px;text-align:center;font-size:18px;line-height:1;white-space:nowrap;letter-spacing:0.6px;">Vx[Y]</div>
<div style="position:absolute;left:828px;top:363px;width:100px;text-align:center;font-size:18px;line-height:1;white-space:nowrap;letter-spacing:0.6px;">Vy[Y]</div>
<div style="position:absolute;left:928px;top:363px;width:100px;text-align:center;font-size:18px;line-height:1;white-space:nowrap;letter-spacing:0.6px;">Vtot[Y]</div>
<div style="position:absolute;left:400px;top:396px;font-size:18px;line-height:1;color:#000;font-weight:bold;white-space:nowrap;letter-spacing:0.6px;">1</div>
<div style="position:absolute;left:432px;top:396px;font-size:18px;line-height:1;color:#000;font-weight:normal;white-space:nowrap;letter-spacing:0.6px;">35</div>
<div style="position:absolute;left:532px;top:396px;font-size:18px;line-height:1;color:#000;font-weight:normal;white-space:nowrap;letter-spacing:0.6px;">−10,47</div>
<div style="position:absolute;left:632px;top:396px;font-size:18px;line-height:1;color:#000;font-weight:normal;white-space:nowrap;letter-spacing:0.6px;">15,xx</div>
<div style="position:absolute;left:732px;top:396px;font-size:18px;line-height:1;color:#000;font-weight:normal;white-space:nowrap;letter-spacing:0.6px;">−0,1xxx</div>
<div style="position:absolute;left:832px;top:396px;font-size:18px;line-height:1;color:#000;font-weight:normal;white-space:nowrap;letter-spacing:0.6px;">0,00xx</div>
<div style="position:absolute;left:932px;top:396px;font-size:18px;line-height:1;color:#000;font-weight:normal;white-space:nowrap;letter-spacing:0.6px;">0,1xxx...</div>
<div style="position:absolute;left:400px;top:428px;font-size:18px;line-height:1;color:#000;font-weight:bold;white-space:nowrap;letter-spacing:0.6px;">2</div>
<div style="position:absolute;left:432px;top:428px;font-size:18px;line-height:1;color:#000;font-weight:normal;white-space:nowrap;letter-spacing:0.6px;">55</div>
<div style="position:absolute;left:532px;top:428px;font-size:18px;line-height:1;color:#000;font-weight:normal;white-space:nowrap;letter-spacing:0.6px;">−11,58</div>
<div style="position:absolute;left:632px;top:428px;font-size:18px;line-height:1;color:#000;font-weight:normal;white-space:nowrap;letter-spacing:0.6px;">15,xx</div>
<div style="position:absolute;left:732px;top:428px;font-size:18px;line-height:1;color:#000;font-weight:normal;white-space:nowrap;letter-spacing:0.6px;">−0,1xxx</div>
<div style="position:absolute;left:832px;top:428px;font-size:18px;line-height:1;color:#000;font-weight:normal;white-space:nowrap;letter-spacing:0.6px;">0,00xx</div>
<div style="position:absolute;left:932px;top:428px;font-size:18px;line-height:1;color:#000;font-weight:normal;white-space:nowrap;letter-spacing:0.6px;">0,1xxx...</div>
<div style="position:absolute;left:400px;top:460px;font-size:18px;line-height:1;color:#000;font-weight:bold;white-space:nowrap;letter-spacing:0.6px;">3</div>
<div style="position:absolute;left:432px;top:460px;font-size:18px;line-height:1;color:#000;font-weight:normal;white-space:nowrap;letter-spacing:0.6px;">75</div>
<div style="position:absolute;left:532px;top:460px;font-size:18px;line-height:1;color:#000;font-weight:normal;white-space:nowrap;letter-spacing:0.6px;">−12,56</div>
<div style="position:absolute;left:632px;top:460px;font-size:18px;line-height:1;color:#000;font-weight:normal;white-space:nowrap;letter-spacing:0.6px;">15,xx</div>
<div style="position:absolute;left:732px;top:460px;font-size:18px;line-height:1;color:#000;font-weight:normal;white-space:nowrap;letter-spacing:0.6px;">−0,1xxx</div>
<div style="position:absolute;left:832px;top:460px;font-size:18px;line-height:1;color:#000;font-weight:normal;white-space:nowrap;letter-spacing:0.6px;">0,00xx</div>
<div style="position:absolute;left:932px;top:460px;font-size:18px;line-height:1;color:#000;font-weight:normal;white-space:nowrap;letter-spacing:0.6px;">0,1xxx...</div>
<div style="position:absolute;left:400px;top:492px;font-size:18px;line-height:1;color:#000;font-weight:bold;white-space:nowrap;letter-spacing:0.6px;">4</div>
<div style="position:absolute;left:432px;top:492px;font-size:18px;line-height:1;color:#000;font-weight:normal;white-space:nowrap;letter-spacing:0.6px;">95</div>
<div style="position:absolute;left:532px;top:492px;font-size:18px;line-height:1;color:#000;font-weight:normal;white-space:nowrap;letter-spacing:0.6px;">−14,51</div>
<div style="position:absolute;left:632px;top:492px;font-size:18px;line-height:1;color:#000;font-weight:normal;white-space:nowrap;letter-spacing:0.6px;">15,xx</div>
<div style="position:absolute;left:732px;top:492px;font-size:18px;line-height:1;color:#000;font-weight:normal;white-space:nowrap;letter-spacing:0.6px;">−0,1xxx</div>
<div style="position:absolute;left:832px;top:492px;font-size:18px;line-height:1;color:#000;font-weight:normal;white-space:nowrap;letter-spacing:0.6px;">0,00xx</div>
<div style="position:absolute;left:932px;top:492px;font-size:18px;line-height:1;color:#000;font-weight:normal;white-space:nowrap;letter-spacing:0.6px;">0,1xxx...</div>
<div style="position:absolute;left:400px;top:524px;font-size:18px;line-height:1;color:#000;font-weight:bold;white-space:nowrap;letter-spacing:0.6px;">5</div>
<div style="position:absolute;left:432px;top:524px;font-size:18px;line-height:1;color:#000;font-weight:normal;white-space:nowrap;letter-spacing:0.6px;">115</div>
<div style="position:absolute;left:532px;top:524px;font-size:18px;line-height:1;color:#000;font-weight:normal;white-space:nowrap;letter-spacing:0.6px;">−15,21</div>
<div style="position:absolute;left:632px;top:524px;font-size:18px;line-height:1;color:#000;font-weight:normal;white-space:nowrap;letter-spacing:0.6px;">15,xx</div>
<div style="position:absolute;left:732px;top:524px;font-size:18px;line-height:1;color:#000;font-weight:normal;white-space:nowrap;letter-spacing:0.6px;">−0,1xxx</div>
<div style="position:absolute;left:832px;top:524px;font-size:18px;line-height:1;color:#000;font-weight:normal;white-space:nowrap;letter-spacing:0.6px;">0,00xx</div>
<div style="position:absolute;left:932px;top:524px;font-size:18px;line-height:1;color:#000;font-weight:normal;white-space:nowrap;letter-spacing:0.6px;">0,1xxx...</div>
<div style="position:absolute;left:400px;top:556px;font-size:18px;line-height:1;color:#000;font-weight:bold;white-space:nowrap;letter-spacing:0.6px;">6</div>
<div style="position:absolute;left:432px;top:556px;font-size:18px;line-height:1;color:#000;font-weight:normal;white-space:nowrap;letter-spacing:0.6px;">135</div>
<div style="position:absolute;left:532px;top:556px;font-size:18px;line-height:1;color:#000;font-weight:normal;white-space:nowrap;letter-spacing:0.6px;">−16,19</div>
<div style="position:absolute;left:632px;top:556px;font-size:18px;line-height:1;color:#000;font-weight:normal;white-space:nowrap;letter-spacing:0.6px;">15,xx</div>
<div style="position:absolute;left:732px;top:556px;font-size:18px;line-height:1;color:#000;font-weight:normal;white-space:nowrap;letter-spacing:0.6px;">−0,1xxx</div>
<div style="position:absolute;left:832px;top:556px;font-size:18px;line-height:1;color:#000;font-weight:normal;white-space:nowrap;letter-spacing:0.6px;">0,00xx</div>
<div style="position:absolute;left:932px;top:556px;font-size:18px;line-height:1;color:#000;font-weight:normal;white-space:nowrap;letter-spacing:0.6px;">0,1xxx...</div>
<div style="position:absolute;left:400px;top:588px;font-size:18px;line-height:1;color:#000;font-weight:bold;white-space:nowrap;letter-spacing:0.6px;">7</div>
<div style="position:absolute;left:432px;top:588px;font-size:18px;line-height:1;color:#000;font-weight:normal;white-space:nowrap;letter-spacing:0.6px;">155</div>
<div style="position:absolute;left:532px;top:588px;font-size:18px;line-height:1;color:#000;font-weight:normal;white-space:nowrap;letter-spacing:0.6px;">−17,44</div>
<div style="position:absolute;left:632px;top:588px;font-size:18px;line-height:1;color:#000;font-weight:normal;white-space:nowrap;letter-spacing:0.6px;">15,xx</div>
<div style="position:absolute;left:732px;top:588px;font-size:18px;line-height:1;color:#000;font-weight:normal;white-space:nowrap;letter-spacing:0.6px;">−0,1xxx</div>
<div style="position:absolute;left:832px;top:588px;font-size:18px;line-height:1;color:#000;font-weight:normal;white-space:nowrap;letter-spacing:0.6px;">0,00xx</div>
<div style="position:absolute;left:932px;top:588px;font-size:18px;line-height:1;color:#000;font-weight:normal;white-space:nowrap;letter-spacing:0.6px;">0,1xxx...</div>
<div style="position:absolute;left:400px;top:620px;font-size:18px;line-height:1;color:#000;font-weight:bold;white-space:nowrap;letter-spacing:0.6px;">8</div>
<div style="position:absolute;left:432px;top:620px;font-size:18px;line-height:1;color:#000;font-weight:normal;white-space:nowrap;letter-spacing:0.6px;">175</div>
<div style="position:absolute;left:532px;top:620px;font-size:18px;line-height:1;color:#000;font-weight:normal;white-space:nowrap;letter-spacing:0.6px;">−18,28</div>
<div style="position:absolute;left:632px;top:620px;font-size:18px;line-height:1;color:#000;font-weight:normal;white-space:nowrap;letter-spacing:0.6px;">15,xx</div>
<div style="position:absolute;left:732px;top:620px;font-size:18px;line-height:1;color:#000;font-weight:normal;white-space:nowrap;letter-spacing:0.6px;">−0,1xxx</div>
<div style="position:absolute;left:832px;top:620px;font-size:18px;line-height:1;color:#000;font-weight:normal;white-space:nowrap;letter-spacing:0.6px;">0,00xx</div>
<div style="position:absolute;left:932px;top:620px;font-size:18px;line-height:1;color:#000;font-weight:normal;white-space:nowrap;letter-spacing:0.6px;">0,1xxx...</div>
<div style="position:absolute;left:400px;top:652px;font-size:18px;line-height:1;color:#000;font-weight:bold;white-space:nowrap;letter-spacing:0.6px;">9</div>
<div style="position:absolute;left:432px;top:652px;font-size:18px;line-height:1;color:#000;font-weight:normal;white-space:nowrap;letter-spacing:0.6px;">195</div>
<div style="position:absolute;left:532px;top:652px;font-size:18px;line-height:1;color:#000;font-weight:normal;white-space:nowrap;letter-spacing:0.6px;">−19,53</div>
<div style="position:absolute;left:632px;top:652px;font-size:18px;line-height:1;color:#000;font-weight:normal;white-space:nowrap;letter-spacing:0.6px;">15,xx</div>
<div style="position:absolute;left:732px;top:652px;font-size:18px;line-height:1;color:#000;font-weight:normal;white-space:nowrap;letter-spacing:0.6px;">−0,1xxx</div>
<div style="position:absolute;left:832px;top:652px;font-size:18px;line-height:1;color:#000;font-weight:normal;white-space:nowrap;letter-spacing:0.6px;">0,00xx</div>
<div style="position:absolute;left:932px;top:652px;font-size:18px;line-height:1;color:#000;font-weight:normal;white-space:nowrap;letter-spacing:0.6px;">0,1xxx...</div>
<div style="position:absolute;left:400px;top:684px;font-size:18px;line-height:1;color:#000;font-weight:bold;white-space:nowrap;letter-spacing:0.6px;">10</div>
<div style="position:absolute;left:432px;top:684px;font-size:18px;line-height:1;color:#000;font-weight:normal;white-space:nowrap;letter-spacing:0.6px;">215</div>
<div style="position:absolute;left:532px;top:684px;font-size:18px;line-height:1;color:#000;font-weight:normal;white-space:nowrap;letter-spacing:0.6px;">−20,51</div>
<div style="position:absolute;left:632px;top:684px;font-size:18px;line-height:1;color:#000;font-weight:normal;white-space:nowrap;letter-spacing:0.6px;">15,xx</div>
<div style="position:absolute;left:732px;top:684px;font-size:18px;line-height:1;color:#000;font-weight:normal;white-space:nowrap;letter-spacing:0.6px;">−0,1xxx</div>
<div style="position:absolute;left:832px;top:684px;font-size:18px;line-height:1;color:#000;font-weight:normal;white-space:nowrap;letter-spacing:0.6px;">0,00xx</div>
<div style="position:absolute;left:932px;top:684px;font-size:18px;line-height:1;color:#000;font-weight:normal;white-space:nowrap;letter-spacing:0.6px;">0,1xxx...</div>
<div style="position:absolute;left:400px;top:716px;font-size:18px;line-height:1;color:#000;font-weight:bold;white-space:nowrap;letter-spacing:0.6px;">11</div>
<div style="position:absolute;left:432px;top:716px;font-size:18px;line-height:1;color:#000;font-weight:normal;white-space:nowrap;letter-spacing:0.6px;">235</div>
<div style="position:absolute;left:532px;top:716px;font-size:18px;line-height:1;color:#000;font-weight:normal;white-space:nowrap;letter-spacing:0.6px;">−23,44</div>
<div style="position:absolute;left:632px;top:716px;font-size:18px;line-height:1;color:#000;font-weight:normal;white-space:nowrap;letter-spacing:0.6px;">15,xx</div>
<div style="position:absolute;left:732px;top:716px;font-size:18px;line-height:1;color:#000;font-weight:normal;white-space:nowrap;letter-spacing:0.6px;">−0,1xxx</div>
<div style="position:absolute;left:832px;top:716px;font-size:18px;line-height:1;color:#000;font-weight:normal;white-space:nowrap;letter-spacing:0.6px;">0,00xx</div>
<div style="position:absolute;left:932px;top:716px;font-size:18px;line-height:1;color:#000;font-weight:normal;white-space:nowrap;letter-spacing:0.6px;">0,1xxx...</div>
<div style="position:absolute;left:400px;top:748px;font-size:18px;line-height:1;color:#000;font-weight:bold;white-space:nowrap;letter-spacing:0.6px;">12</div>
<div style="position:absolute;left:432px;top:748px;font-size:18px;line-height:1;color:#000;font-weight:normal;white-space:nowrap;letter-spacing:0.6px;">255</div>
<div style="position:absolute;left:532px;top:748px;font-size:18px;line-height:1;color:#000;font-weight:normal;white-space:nowrap;letter-spacing:0.6px;">−31,67</div>
<div style="position:absolute;left:632px;top:748px;font-size:18px;line-height:1;color:#000;font-weight:normal;white-space:nowrap;letter-spacing:0.6px;">15,xx</div>
<div style="position:absolute;left:732px;top:748px;font-size:18px;line-height:1;color:#000;font-weight:normal;white-space:nowrap;letter-spacing:0.6px;">−0,1xxx</div>
<div style="position:absolute;left:832px;top:748px;font-size:18px;line-height:1;color:#000;font-weight:normal;white-space:nowrap;letter-spacing:0.6px;">0,00xx</div>
<div style="position:absolute;left:932px;top:748px;font-size:18px;line-height:1;color:#000;font-weight:normal;white-space:nowrap;letter-spacing:0.6px;">0,1xxx...</div>
<div style="position:absolute;left:400px;top:780px;font-size:18px;line-height:1;color:#000;font-weight:bold;white-space:nowrap;letter-spacing:0.6px;">13</div>
<div style="position:absolute;left:432px;top:780px;font-size:18px;line-height:1;color:#000;font-weight:normal;white-space:nowrap;letter-spacing:0.6px;">275</div>
<div style="position:absolute;left:532px;top:780px;font-size:18px;line-height:1;color:#000;font-weight:normal;white-space:nowrap;letter-spacing:0.6px;">−33,49</div>
<div style="position:absolute;left:632px;top:780px;font-size:18px;line-height:1;color:#000;font-weight:normal;white-space:nowrap;letter-spacing:0.6px;">15,xx</div>
<div style="position:absolute;left:732px;top:780px;font-size:18px;line-height:1;color:#000;font-weight:normal;white-space:nowrap;letter-spacing:0.6px;">−0,1xxx</div>
<div style="position:absolute;left:832px;top:780px;font-size:18px;line-height:1;color:#000;font-weight:normal;white-space:nowrap;letter-spacing:0.6px;">0,00xx</div>
<div style="position:absolute;left:932px;top:780px;font-size:18px;line-height:1;color:#000;font-weight:normal;white-space:nowrap;letter-spacing:0.6px;">0,1xxx...</div>
<div style="position:absolute;left:400px;top:812px;font-size:18px;line-height:1;color:#000;font-weight:bold;white-space:nowrap;letter-spacing:0.6px;">14</div>
<div style="position:absolute;left:432px;top:812px;font-size:18px;line-height:1;color:#000;font-weight:normal;white-space:nowrap;letter-spacing:0.6px;">295</div>
<div style="position:absolute;left:532px;top:812px;font-size:18px;line-height:1;color:#000;font-weight:normal;white-space:nowrap;letter-spacing:0.6px;">−35,3</div>
<div style="position:absolute;left:632px;top:812px;font-size:18px;line-height:1;color:#000;font-weight:normal;white-space:nowrap;letter-spacing:0.6px;">15,xx</div>
<div style="position:absolute;left:732px;top:812px;font-size:18px;line-height:1;color:#000;font-weight:normal;white-space:nowrap;letter-spacing:0.6px;">−0,1xxx</div>
<div style="position:absolute;left:832px;top:812px;font-size:18px;line-height:1;color:#000;font-weight:normal;white-space:nowrap;letter-spacing:0.6px;">0,00xx</div>
<div style="position:absolute;left:932px;top:812px;font-size:18px;line-height:1;color:#000;font-weight:normal;white-space:nowrap;letter-spacing:0.6px;">0,1xxx...</div>
<div style="position:absolute;left:400px;top:844px;font-size:18px;line-height:1;color:#000;font-weight:bold;white-space:nowrap;letter-spacing:0.6px;">15</div>
<div style="position:absolute;left:432px;top:844px;font-size:18px;line-height:1;color:#000;font-weight:normal;white-space:nowrap;letter-spacing:0.6px;">315</div>
<div style="position:absolute;left:532px;top:844px;font-size:18px;line-height:1;color:#000;font-weight:normal;white-space:nowrap;letter-spacing:0.6px;">−37,4</div>
<div style="position:absolute;left:632px;top:844px;font-size:18px;line-height:1;color:#000;font-weight:normal;white-space:nowrap;letter-spacing:0.6px;">15,07</div>
<div style="position:absolute;left:732px;top:844px;font-size:18px;line-height:1;color:#000;font-weight:normal;white-space:nowrap;letter-spacing:0.6px;">−0,1458</div>
<div style="position:absolute;left:832px;top:844px;font-size:18px;line-height:1;color:#000;font-weight:normal;white-space:nowrap;letter-spacing:0.6px;">0,0028</div>
<div style="position:absolute;left:932px;top:844px;font-size:18px;line-height:1;color:#000;font-weight:normal;white-space:nowrap;letter-spacing:0.6px;">0,14582...</div>
<div style="position:absolute;left:400px;top:876px;font-size:18px;line-height:1;color:#000;font-weight:bold;white-space:nowrap;letter-spacing:0.6px;">16</div>
<div style="position:absolute;left:432px;top:876px;font-size:18px;line-height:1;color:#000;font-weight:normal;white-space:nowrap;letter-spacing:0.6px;">335</div>
<div style="position:absolute;left:532px;top:876px;font-size:18px;line-height:1;color:#000;font-weight:normal;white-space:nowrap;letter-spacing:0.6px;">−39,49</div>
<div style="position:absolute;left:632px;top:876px;font-size:18px;line-height:1;color:#000;font-weight:normal;white-space:nowrap;letter-spacing:0.6px;">15,21</div>
<div style="position:absolute;left:732px;top:876px;font-size:18px;line-height:1;color:#000;font-weight:normal;white-space:nowrap;letter-spacing:0.6px;">−0,14235</div>
<div style="position:absolute;left:832px;top:876px;font-size:18px;line-height:1;color:#000;font-weight:normal;white-space:nowrap;letter-spacing:0.6px;">0,0021</div>
<div style="position:absolute;left:932px;top:876px;font-size:18px;line-height:1;color:#000;font-weight:normal;white-space:nowrap;letter-spacing:0.6px;">0,14236...</div>
<div style="position:absolute;left:400px;top:908px;font-size:18px;line-height:1;color:#000;font-weight:bold;white-space:nowrap;letter-spacing:0.6px;">17</div>
<div style="position:absolute;left:432px;top:908px;font-size:18px;line-height:1;color:#000;font-weight:normal;white-space:nowrap;letter-spacing:0.6px;">355</div>
<div style="position:absolute;left:532px;top:908px;font-size:18px;line-height:1;color:#000;font-weight:normal;white-space:nowrap;letter-spacing:0.6px;">−42,42</div>
<div style="position:absolute;left:632px;top:908px;font-size:18px;line-height:1;color:#000;font-weight:normal;white-space:nowrap;letter-spacing:0.6px;">15,21</div>
<div style="position:absolute;left:732px;top:908px;font-size:18px;line-height:1;color:#000;font-weight:normal;white-space:nowrap;letter-spacing:0.6px;">−0,11655</div>
<div style="position:absolute;left:832px;top:908px;font-size:18px;line-height:1;color:#000;font-weight:normal;white-space:nowrap;letter-spacing:0.6px;">0,0049</div>
<div style="position:absolute;left:932px;top:908px;font-size:18px;line-height:1;color:#000;font-weight:normal;white-space:nowrap;letter-spacing:0.6px;">0,11665...</div>
<div style="position:absolute;left:400px;top:940px;font-size:18px;line-height:1;color:#000;font-weight:bold;white-space:nowrap;letter-spacing:0.6px;">18</div>
<div style="position:absolute;left:432px;top:940px;font-size:18px;line-height:1;color:#000;font-weight:normal;white-space:nowrap;letter-spacing:0.6px;">375</div>
<div style="position:absolute;left:532px;top:940px;font-size:18px;line-height:1;color:#000;font-weight:normal;white-space:nowrap;letter-spacing:0.6px;">−44,65</div>
<div style="position:absolute;left:632px;top:940px;font-size:18px;line-height:1;color:#000;font-weight:normal;white-space:nowrap;letter-spacing:0.6px;">15,35</div>
<div style="position:absolute;left:732px;top:940px;font-size:18px;line-height:1;color:#000;font-weight:normal;white-space:nowrap;letter-spacing:0.6px;">−0,1207</div>
<div style="position:absolute;left:832px;top:940px;font-size:18px;line-height:1;color:#000;font-weight:normal;white-space:nowrap;letter-spacing:0.6px;">0,0042</div>
<div style="position:absolute;left:932px;top:940px;font-size:18px;line-height:1;color:#000;font-weight:normal;white-space:nowrap;letter-spacing:0.6px;">0,12077...</div>
<div style="position:absolute;left:400px;top:972px;font-size:18px;line-height:1;color:#000;font-weight:bold;white-space:nowrap;letter-spacing:0.6px;">19</div>
<div style="position:absolute;left:432px;top:972px;font-size:18px;line-height:1;color:#000;font-weight:normal;white-space:nowrap;letter-spacing:0.6px;">395</div>
<div style="position:absolute;left:532px;top:972px;font-size:18px;line-height:1;color:#000;font-weight:normal;white-space:nowrap;letter-spacing:0.6px;">−47,72</div>
<div style="position:absolute;left:632px;top:972px;font-size:18px;line-height:1;color:#000;font-weight:normal;white-space:nowrap;letter-spacing:0.6px;">15,35</div>
<div style="position:absolute;left:732px;top:972px;font-size:18px;line-height:1;color:#000;font-weight:normal;white-space:nowrap;letter-spacing:0.6px;">−0,127</div>
<div style="position:absolute;left:832px;top:972px;font-size:18px;line-height:1;color:#000;font-weight:normal;white-space:nowrap;letter-spacing:0.6px;">0,0042</div>
<div style="position:absolute;left:932px;top:972px;font-size:18px;line-height:1;color:#000;font-weight:normal;white-space:nowrap;letter-spacing:0.6px;">0,12706...</div>
<div style="position:absolute;left:400px;top:1004px;font-size:18px;line-height:1;color:#000;font-weight:bold;white-space:nowrap;letter-spacing:0.6px;">20</div>
<div style="position:absolute;left:432px;top:1004px;font-size:18px;line-height:1;color:#000;font-weight:normal;white-space:nowrap;letter-spacing:0.6px;">415</div>
<div style="position:absolute;left:532px;top:1004px;font-size:18px;line-height:1;color:#000;font-weight:normal;white-space:nowrap;letter-spacing:0.6px;">−49,67</div>
<div style="position:absolute;left:632px;top:1004px;font-size:18px;line-height:1;color:#000;font-weight:normal;white-space:nowrap;letter-spacing:0.6px;">15,49</div>
<div style="position:absolute;left:732px;top:1004px;font-size:18px;line-height:1;color:#000;font-weight:normal;white-space:nowrap;letter-spacing:0.6px;">−0,12205</div>
<div style="position:absolute;left:832px;top:1004px;font-size:18px;line-height:1;color:#000;font-weight:normal;white-space:nowrap;letter-spacing:0.6px;">0,0035</div>
<div style="position:absolute;left:932px;top:1004px;font-size:18px;line-height:1;color:#000;font-weight:normal;white-space:nowrap;letter-spacing:0.6px;">0,12210...</div>
<div style="position:absolute;left:1410px;top:355px;width:25px;height:700px;background:#f0f0f0;"></div>
<div style="position:absolute;left:1410px;top:381px;width:24px;height:198px;background:#cdcdcd;"></div>
<svg style="position:absolute;left:1414px;top:361px;" width="18" height="12" viewBox="0 0 18 12"><path d="M3,10 L9,4 L15,10" fill="none" stroke="#5a5a5a" stroke-width="3"/></svg>
<div style="position:absolute;left:613px;top:153px;width:766px;height:681px;background:linear-gradient(to bottom,#98b2d3 0px,#bbd3ec 44px,#b9d1ea 45px,#b9d1ea 100%);border:1px solid #3c3c3c;border-top-color:#f8fafc;border-radius:7px 7px 0 0;"></div>
<div style="position:absolute;left:620px;top:197px;width:752px;height:630px;background:#fff;"></div>
<svg style="position:absolute;left:627px;top:168px;" width="22" height="22" viewBox="0 0 22 22"><rect x="1" y="1" width="20" height="20" fill="#fff" stroke="#333" stroke-width="2"/><path d="M3,8 L9,2 L13,6 L19,12" fill="none" stroke="#ff4040" stroke-width="1.2"/><circle cx="9" cy="2.5" r="1.8" fill="#f02020"/><circle cx="13" cy="6.5" r="1.8" fill="#f02020"/><path d="M3,15 L9,9 L13,13 L19,8" fill="none" stroke="#6060ff" stroke-width="1.2"/><circle cx="9" cy="9.5" r="1.8" fill="#3030f0"/><circle cx="13" cy="13.5" r="1.8" fill="#3030f0"/></svg>
<div style="position:absolute;left:659px;top:172px;font-size:18px;line-height:1;color:#000;font-weight:normal;white-space:nowrap;letter-spacing:0.3px;">Graphe2</div>
<div style="position:absolute;left:1211px;top:165px;width:50px;height:29px;background:linear-gradient(to bottom,#c3d6ec 0%,#bcd1e9 40%,#98b2d3 41%,#9ab3d3 80%,#b9cfe8 100%);border:1px solid #5f7390;border-radius:3px;"></div>
<div style="position:absolute;left:1228px;top:180px;width:17px;height:6px;background:#f4f4f4;border:1px solid #4a4a4a;border-radius:1px;"></div>
<div style="position:absolute;left:1263px;top:165px;width:50px;height:29px;background:linear-gradient(to bottom,#c3d6ec 0%,#bcd1e9 40%,#98b2d3 41%,#9ab3d3 80%,#b9cfe8 100%);border:1px solid #5f7390;border-radius:3px;"></div>
<div style="position:absolute;left:1280px;top:172px;width:17px;height:15px;background:transparent;border:1px solid #4a4a4a;border-radius:1px;"></div>
<div style="position:absolute;left:1281px;top:173px;width:15px;height:13px;background:transparent;border:3px solid #f4f4f4;"></div>
<div style="position:absolute;left:1284px;top:176px;width:9px;height:7px;background:transparent;border:1px solid #4a4a4a;"></div>
<div style="position:absolute;left:1315px;top:165px;width:50px;height:29px;background:linear-gradient(to bottom,#e59a89 0%,#d9806c 40%,#bd4a32 41%,#c0503a 80%,#d8826e 100%);border:1px solid #5a1a12;border-radius:3px;"></div>
<svg style="position:absolute;left:1331px;top:171px;" width="18" height="16" viewBox="0 0 18 16"><path d="M4,3 L14,13 M14,3 L4,13" stroke="#4a4a4a" stroke-width="6.5" stroke-linecap="round"/><path d="M4,3 L14,13 M14,3 L4,13" stroke="#f4f4f4" stroke-width="4.2" stroke-linecap="round"/></svg>
<div style="position:absolute;left:621px;top:198px;width:28px;height:28px;background:#cce4f7;border:1px solid #2a6cb0;"></div>
<div style="position:absolute;left:630px;top:205px;font-size:16px;line-height:1;color:#000;font-weight:normal;white-space:nowrap;">1</div>
<svg style="position:absolute;left:1313px;top:198px;" width="58" height="28" viewBox="0 0 58 28"><rect x="0.5" y="0.5" width="27" height="27" fill="#e1e1e1" stroke="#bdbdbd"/><rect x="30.5" y="0.5" width="27" height="27" fill="#e1e1e1" stroke="#bdbdbd"/><defs><linearGradient id="gp" x1="0" y1="0" x2="1" y2="1"><stop offset="0" stop-color="#78e060"/><stop offset="1" stop-color="#1c8a14"/></linearGradient></defs><path d="M10.5,5 h7 v6 h6 v7 h-6 v6 h-7 v-6 h-6 v-7 h6 z" fill="url(#gp)" stroke="#1a6a12" stroke-width="0.8"/><path d="M36,5 L52,21 M52,5 L36,21" stroke="#777" stroke-width="3" transform="translate(1,2)" opacity="0.5"/><path d="M36,5 L52,21 M52,5 L36,21" stroke="#f00000" stroke-width="3"/></svg>
<svg style="position:absolute;left:613px;top:153px;" width="766" height="681" viewBox="0 0 766 681"><line x1="103.5" y1="163" x2="103.5" y2="613" stroke="#a4a4a4" stroke-width="1" stroke-dasharray="4,2"/><line x1="123.5" y1="163" x2="123.5" y2="613" stroke="#a4a4a4" stroke-width="1" stroke-dasharray="4,2"/><line x1="143.5" y1="163" x2="143.5" y2="613" stroke="#a4a4a4" stroke-width="1" stroke-dasharray="4,2"/><line x1="163.5" y1="163" x2="163.5" y2="613" stroke="#a4a4a4" stroke-width="1" stroke-dasharray="4,2"/><line x1="183.5" y1="163" x2="183.5" y2="613" stroke="#a4a4a4" stroke-width="1"/><line x1="203.5" y1="163" x2="203.5" y2="613" stroke="#a4a4a4" stroke-width="1" stroke-dasharray="4,2"/><line x1="223.5" y1="163" x2="223.5" y2="613" stroke="#a4a4a4" stroke-width="1" stroke-dasharray="4,2"/><line x1="243.5" y1="163" x2="243.5" y2="613" stroke="#a4a4a4" stroke-width="1" stroke-dasharray="4,2"/><line x1="263.5" y1="163" x2="263.5" y2="613" stroke="#a4a4a4" stroke-width="1" stroke-dasharray="4,2"/><line x1="283.5" y1="163" x2="283.5" y2="613" stroke="#a4a4a4" stroke-width="1"/><line x1="303.5" y1="163" x2="303.5" y2="613" stroke="#a4a4a4" stroke-width="1" stroke-dasharray="4,2"/><line x1="323.5" y1="163" x2="323.5" y2="613" stroke="#a4a4a4" stroke-width="1" stroke-dasharray="4,2"/><line x1="343.5" y1="163" x2="343.5" y2="613" stroke="#a4a4a4" stroke-width="1" stroke-dasharray="4,2"/><line x1="363.5" y1="163" x2="363.5" y2="613" stroke="#a4a4a4" stroke-width="1" stroke-dasharray="4,2"/><line x1="383.5" y1="163" x2="383.5" y2="613" stroke="#a4a4a4" stroke-width="1"/><line x1="402.5" y1="163" x2="402.5" y2="613" stroke="#a4a4a4" stroke-width="1" stroke-dasharray="4,2"/><line x1="422.5" y1="163" x2="422.5" y2="613" stroke="#a4a4a4" stroke-width="1" stroke-dasharray="4,2"/><line x1="442.5" y1="163" x2="442.5" y2="613" stroke="#a4a4a4" stroke-width="1" stroke-dasharray="4,2"/><line x1="462.5" y1="163" x2="462.5" y2="613" stroke="#a4a4a4" stroke-width="1" stroke-dasharray="4,2"/><line x1="482.5" y1="163" x2="482.5" y2="613" stroke="#a4a4a4" stroke-width="1"/><line x1="502.5" y1="163" x2="502.5" y2="613" stroke="#a4a4a4" stroke-width="1" stroke-dasharray="4,2"/><line x1="522.5" y1="163" x2="522.5" y2="613" stroke="#a4a4a4" stroke-width="1" stroke-dasharray="4,2"/><line x1="542.5" y1="163" x2="542.5" y2="613" stroke="#a4a4a4" stroke-width="1" stroke-dasharray="4,2"/><line x1="562.5" y1="163" x2="562.5" y2="613" stroke="#a4a4a4" stroke-width="1" stroke-dasharray="4,2"/><line x1="582.5" y1="163" x2="582.5" y2="613" stroke="#a4a4a4" stroke-width="1"/><line x1="602.5" y1="163" x2="602.5" y2="613" stroke="#a4a4a4" stroke-width="1" stroke-dasharray="4,2"/><line x1="622.5" y1="163" x2="622.5" y2="613" stroke="#a4a4a4" stroke-width="1" stroke-dasharray="4,2"/><line x1="642.5" y1="163" x2="642.5" y2="613" stroke="#a4a4a4" stroke-width="1" stroke-dasharray="4,2"/><line x1="662.5" y1="163" x2="662.5" y2="613" stroke="#a4a4a4" stroke-width="1" stroke-dasharray="4,2"/><line x1="83" y1="176.5" x2="683" y2="176.5" stroke="#a4a4a4" stroke-width="1" stroke-dasharray="4,2"/><line x1="83" y1="189.5" x2="683" y2="189.5" stroke="#a4a4a4" stroke-width="1" stroke-dasharray="4,2"/><line x1="83" y1="201.5" x2="683" y2="201.5" stroke="#a4a4a4" stroke-width="1" stroke-dasharray="4,2"/><line x1="83" y1="214.5" x2="683" y2="214.5" stroke="#a4a4a4" stroke-width="1" stroke-dasharray="4,2"/><line x1="83" y1="227.5" x2="683" y2="227.5" stroke="#a4a4a4" stroke-width="1"/><line x1="83" y1="240.5" x2="683" y2="240.5" stroke="#a4a4a4" stroke-width="1" stroke-dasharray="4,2"/><line x1="83" y1="253.5" x2="683" y2="253.5" stroke="#a4a4a4" stroke-width="1" stroke-dasharray="4,2"/><line x1="83" y1="266.5" x2="683" y2="266.5" stroke="#a4a4a4" stroke-width="1" stroke-dasharray="4,2"/><line x1="83" y1="278.5" x2="683" y2="278.5" stroke="#a4a4a4" stroke-width="1" stroke-dasharray="4,2"/><line x1="83" y1="291.5" x2="683" y2="291.5" stroke="#a4a4a4" stroke-width="1"/><line x1="83" y1="304.5" x2="683" y2="304.5" stroke="#a4a4a4" stroke-width="1" stroke-dasharray="4,2"/><line x1="83" y1="317.5" x2="683" y2="317.5" stroke="#a4a4a4" stroke-width="1" stroke-dasharray="4,2"/><line x1="83" y1="330.5" x2="683" y2="330.5" stroke="#a4a4a4" stroke-width="1" stroke-dasharray="4,2"/><line x1="83" y1="343.5" x2="683" y2="343.5" stroke="#a4a4a4" stroke-width="1" stroke-dasharray="4,2"/><line x1="83" y1="355.5" x2="683" y2="355.5" stroke="#a4a4a4" stroke-width="1"/><line x1="83" y1="368.5" x2="683" y2="368.5" stroke="#a4a4a4" stroke-width="1" stroke-dasharray="4,2"/><line x1="83" y1="381.5" x2="683" y2="381.5" stroke="#a4a4a4" stroke-width="1" stroke-dasharray="4,2"/><line x1="83" y1="394.5" x2="683" y2="394.5" stroke="#a4a4a4" stroke-width="1" stroke-dasharray="4,2"/><line x1="83" y1="407.5" x2="683" y2="407.5" stroke="#a4a4a4" stroke-width="1" stroke-dasharray="4,2"/><line x1="83" y1="420.5" x2="683" y2="420.5" stroke="#a4a4a4" stroke-width="1"/><line x1="83" y1="432.5" x2="683" y2="432.5" stroke="#a4a4a4" stroke-width="1" stroke-dasharray="4,2"/><line x1="83" y1="445.5" x2="683" y2="445.5" stroke="#a4a4a4" stroke-width="1" stroke-dasharray="4,2"/><line x1="83" y1="458.5" x2="683" y2="458.5" stroke="#a4a4a4" stroke-width="1" stroke-dasharray="4,2"/><line x1="83" y1="471.5" x2="683" y2="471.5" stroke="#a4a4a4" stroke-width="1" stroke-dasharray="4,2"/><line x1="83" y1="484.5" x2="683" y2="484.5" stroke="#a4a4a4" stroke-width="1"/><line x1="83" y1="497.5" x2="683" y2="497.5" stroke="#a4a4a4" stroke-width="1" stroke-dasharray="4,2"/><line x1="83" y1="509.5" x2="683" y2="509.5" stroke="#a4a4a4" stroke-width="1" stroke-dasharray="4,2"/><line x1="83" y1="522.5" x2="683" y2="522.5" stroke="#a4a4a4" stroke-width="1" stroke-dasharray="4,2"/><line x1="83" y1="535.5" x2="683" y2="535.5" stroke="#a4a4a4" stroke-width="1" stroke-dasharray="4,2"/><line x1="83" y1="548.5" x2="683" y2="548.5" stroke="#a4a4a4" stroke-width="1"/><line x1="83" y1="561.5" x2="683" y2="561.5" stroke="#a4a4a4" stroke-width="1" stroke-dasharray="4,2"/><line x1="83" y1="574.5" x2="683" y2="574.5" stroke="#a4a4a4" stroke-width="1" stroke-dasharray="4,2"/><line x1="83" y1="586.5" x2="683" y2="586.5" stroke="#a4a4a4" stroke-width="1" stroke-dasharray="4,2"/><line x1="83" y1="599.5" x2="683" y2="599.5" stroke="#a4a4a4" stroke-width="1" stroke-dasharray="4,2"/><path d="M83,162.5 H683 M82.5,163 V613 M83,613.5 H684 M683.5,163 V613 M83.5,162 v-9 M84.0,614 v9 M103.5,162 v-5 M103.5,614 v5 M123.5,162 v-5 M123.5,614 v5 M143.5,162 v-5 M143.5,614 v5 M163.5,162 v-5 M163.5,614 v5 M183.5,162 v-9 M183.5,614 v9 M203.5,162 v-5 M203.5,614 v5 M223.5,162 v-5 M223.5,614 v5 M243.5,162 v-5 M243.5,614 v5 M263.5,162 v-5 M263.5,614 v5 M283.5,162 v-9 M283.5,614 v9 M303.5,162 v-5 M303.5,614 v5 M323.5,162 v-5 M323.5,614 v5 M343.5,162 v-5 M343.5,614 v5 M363.5,162 v-5 M363.5,614 v5 M383.5,162 v-9 M383.5,614 v9 M402.5,162 v-5 M402.5,614 v5 M422.5,162 v-5 M422.5,614 v5 M442.5,162 v-5 M442.5,614 v5 M462.5,162 v-5 M462.5,614 v5 M482.5,162 v-9 M482.5,614 v9 M502.5,162 v-5 M502.5,614 v5 M522.5,162 v-5 M522.5,614 v5 M542.5,162 v-5 M542.5,614 v5 M562.5,162 v-5 M562.5,614 v5 M582.5,162 v-9 M582.5,614 v9 M602.5,162 v-5 M602.5,614 v5 M622.5,162 v-5 M622.5,614 v5 M642.5,162 v-5 M642.5,614 v5 M662.5,162 v-5 M662.5,614 v5 M682.5,162 v-9 M682.5,614 v9 M82,163.5 h-9 M684,163.5 h9 M82,176.5 h-5 M684,176.5 h5 M82,189.5 h-5 M684,189.5 h5 M82,201.5 h-5 M684,201.5 h5 M82,214.5 h-5 M684,214.5 h5 M82,227.5 h-9 M684,227.5 h9 M82,240.5 h-5 M684,240.5 h5 M82,253.5 h-5 M684,253.5 h5 M82,266.5 h-5 M684,266.5 h5 M82,278.5 h-5 M684,278.5 h5 M82,291.5 h-9 M684,291.5 h9 M82,304.5 h-5 M684,304.5 h5 M82,317.5 h-5 M684,317.5 h5 M82,330.5 h-5 M684,330.5 h5 M82,343.5 h-5 M684,343.5 h5 M82,355.5 h-9 M684,355.5 h9 M82,368.5 h-5 M684,368.5 h5 M82,381.5 h-5 M684,381.5 h5 M82,394.5 h-5 M684,394.5 h5 M82,407.5 h-5 M684,407.5 h5 M82,420.5 h-9 M684,420.5 h9 M82,432.5 h-5 M684,432.5 h5 M82,445.5 h-5 M684,445.5 h5 M82,458.5 h-5 M684,458.5 h5 M82,471.5 h-5 M684,471.5 h5 M82,484.5 h-9 M684,484.5 h9 M82,497.5 h-5 M684,497.5 h5 M82,509.5 h-5 M684,509.5 h5 M82,522.5 h-5 M684,522.5 h5 M82,535.5 h-5 M684,535.5 h5 M82,548.5 h-9 M684,548.5 h9 M82,561.5 h-5 M684,561.5 h5 M82,574.5 h-5 M684,574.5 h5 M82,586.5 h-5 M684,586.5 h5 M82,599.5 h-5 M684,599.5 h5 M82,612.5 h-9 M684,612.5 h9" stroke="#000" stroke-width="1.6" fill="none"/><g font-family='"Liberation Sans",sans-serif' font-size="16.5" fill="#000"><text x="83.3" y="146" text-anchor="middle" letter-spacing="0.6">0</text><text x="83.3" y="644" text-anchor="middle" letter-spacing="0.6">0</text><text x="183.13333333333338" y="146" text-anchor="middle" letter-spacing="0.6">200</text><text x="183.13333333333338" y="644" text-anchor="middle" letter-spacing="0.6">200</text><text x="282.96666666666664" y="146" text-anchor="middle" letter-spacing="0.6">400</text><text x="282.96666666666664" y="644" text-anchor="middle" letter-spacing="0.6">400</text><text x="382.8" y="146" text-anchor="middle" letter-spacing="0.6">600</text><text x="382.8" y="644" text-anchor="middle" letter-spacing="0.6">600</text><text x="482.63333333333327" y="146" text-anchor="middle" letter-spacing="0.6">800</text><text x="482.63333333333327" y="644" text-anchor="middle" letter-spacing="0.6">800</text><text x="582.4666666666667" y="146" text-anchor="middle" letter-spacing="0.6">1 000</text><text x="582.4666666666667" y="644" text-anchor="middle" letter-spacing="0.6">1 000</text><text x="682.3" y="146" text-anchor="middle" letter-spacing="0.6">1 200</text><text x="682.3" y="644" text-anchor="middle" letter-spacing="0.6">1 200</text><text x="69.5" y="170.0" text-anchor="end" letter-spacing="0.9">0,2</text><text x="697" y="170.0" text-anchor="start" letter-spacing="0.9">0,2</text><text x="69.5" y="234.1428571428571" text-anchor="end" letter-spacing="0.9">0,18</text><text x="697" y="234.1428571428571" text-anchor="start" letter-spacing="0.9">0,18</text><text x="69.5" y="298.28571428571433" text-anchor="end" letter-spacing="0.9">0,16</text><text x="697" y="298.28571428571433" text-anchor="start" letter-spacing="0.9">0,16</text><text x="69.5" y="362.4285714285714" text-anchor="end" letter-spacing="0.9">0,14</text><text x="697" y="362.4285714285714" text-anchor="start" letter-spacing="0.9">0,14</text><text x="69.5" y="426.57142857142856" text-anchor="end" letter-spacing="0.9">0,12</text><text x="697" y="426.57142857142856" text-anchor="start" letter-spacing="0.9">0,12</text><text x="69.5" y="490.7142857142858" text-anchor="end" letter-spacing="0.9">0,1</text><text x="697" y="490.7142857142858" text-anchor="start" letter-spacing="0.9">0,1</text><text x="69.5" y="554.8571428571428" text-anchor="end" letter-spacing="0.9">0,08</text><text x="697" y="554.8571428571428" text-anchor="start" letter-spacing="0.9">0,08</text><text x="69.5" y="619.0" text-anchor="end" letter-spacing="0.9">0,06</text><text x="697" y="619.0" text-anchor="start" letter-spacing="0.9">0,06</text></g><text x="383.70000000000005" y="98" text-anchor="middle" font-family='"Liberation Sans",sans-serif' font-size="20" font-weight="bold" letter-spacing="1.4">Titre</text><text x="383" y="124" text-anchor="middle" font-family='"Liberation Sans",sans-serif' font-size="17" font-weight="bold">t</text><text x="383" y="666" text-anchor="middle" font-family='"Liberation Sans",sans-serif' font-size="17" font-weight="bold">t</text><text transform="translate(29,387) rotate(-90)" text-anchor="middle" font-family='"Liberation Sans",sans-serif' font-size="17" font-weight="bold">Vtot</text><text transform="translate(750,387) rotate(-90)" text-anchor="middle" font-family='"Liberation Sans",sans-serif' font-size="17" font-weight="bold">Vtot</text><rect x="93.5" y="173.5" width="71" height="33" fill="#fff" stroke="#000" stroke-width="1.2"/><circle cx="107" cy="189" r="3.5" fill="#000"/><text x="121" y="196" font-family='"Liberation Sans",sans-serif' font-size="18">Vtot</text><circle cx="150.2" cy="591.4" r="4.1" fill="#000"/><circle cx="160.2" cy="481.4" r="4.1" fill="#000"/><circle cx="170.2" cy="467.6" r="4.1" fill="#000"/><circle cx="180.2" cy="470.5" r="4.1" fill="#000"/><circle cx="190.2" cy="448.2" r="4.1" fill="#000"/><circle cx="200.2" cy="430.5" r="4.1" fill="#000"/><circle cx="210.2" cy="403.5" r="4.1" fill="#000"/><circle cx="220.2" cy="381.3" r="4.1" fill="#000"/><circle cx="230.2" cy="352.5" r="4.1" fill="#000"/><circle cx="240.2" cy="337.3" r="4.1" fill="#000"/><circle cx="250.2" cy="348.4" r="4.1" fill="#000"/><circle cx="260.2" cy="430.4" r="4.1" fill="#000"/><circle cx="270.2" cy="417.2" r="4.1" fill="#000"/><circle cx="280.2" cy="397.1" r="4.1" fill="#000"/><circle cx="290.2" cy="413.2" r="4.1" fill="#000"/><circle cx="300.2" cy="361.3" r="4.1" fill="#000"/><circle cx="310.2" cy="408.5" r="4.1" fill="#000"/><circle cx="320.2" cy="314.5" r="4.1" fill="#000"/><circle cx="330.2" cy="361.3" r="4.1" fill="#000"/><circle cx="340.2" cy="314.5" r="4.1" fill="#000"/><circle cx="350.2" cy="320.4" r="4.1" fill="#000"/><circle cx="360.2" cy="314.5" r="4.1" fill="#000"/><circle cx="370.2" cy="323.2" r="4.1" fill="#000"/><circle cx="380.2" cy="329.2" r="4.1" fill="#000"/><circle cx="390.2" cy="300.5" r="4.1" fill="#000"/><circle cx="400.2" cy="338.5" r="4.1" fill="#000"/><circle cx="410.2" cy="289.3" r="4.1" fill="#000"/><circle cx="420.2" cy="370.3" r="4.1" fill="#000"/><circle cx="430.2" cy="327.5" r="4.1" fill="#000"/><circle cx="440.2" cy="361.4" r="4.1" fill="#000"/><circle cx="450.2" cy="308.4" r="4.1" fill="#000"/><circle cx="460.2" cy="319.3" r="4.1" fill="#000"/><circle cx="470.2" cy="306.3" r="4.1" fill="#000"/><circle cx="480.2" cy="301.2" r="4.1" fill="#000"/><circle cx="490.2" cy="301.2" r="4.1" fill="#000"/><circle cx="500.2" cy="299.4" r="4.1" fill="#000"/><circle cx="510.2" cy="299.4" r="4.1" fill="#000"/><circle cx="520.2" cy="297.4" r="4.1" fill="#000"/><circle cx="530.2" cy="288.2" r="4.1" fill="#000"/><circle cx="540.2" cy="281.4" r="4.1" fill="#000"/><circle cx="550.2" cy="285.4" r="4.1" fill="#000"/><circle cx="560.2" cy="276.2" r="4.1" fill="#000"/><circle cx="570.2" cy="270.4" r="4.1" fill="#000"/><circle cx="580.2" cy="261.5" r="4.1" fill="#000"/><circle cx="590.2" cy="254.3" r="4.1" fill="#000"/><circle cx="600.2" cy="247.4" r="4.1" fill="#000"/><circle cx="610.2" cy="240.3" r="4.1" fill="#000"/><circle cx="620.2" cy="224.2" r="4.1" fill="#000"/><circle cx="630.2" cy="197.2" r="4.1" fill="#000"/><circle cx="640.2" cy="168.4" r="4.1" fill="#000"/><circle cx="650.2" cy="245.4" r="4.1" fill="#000"/><circle cx="660.2" cy="304.3" r="4.1" fill="#000"/><circle cx="670.2" cy="371.3" r="4.1" fill="#000"/></svg>
</body></html>
